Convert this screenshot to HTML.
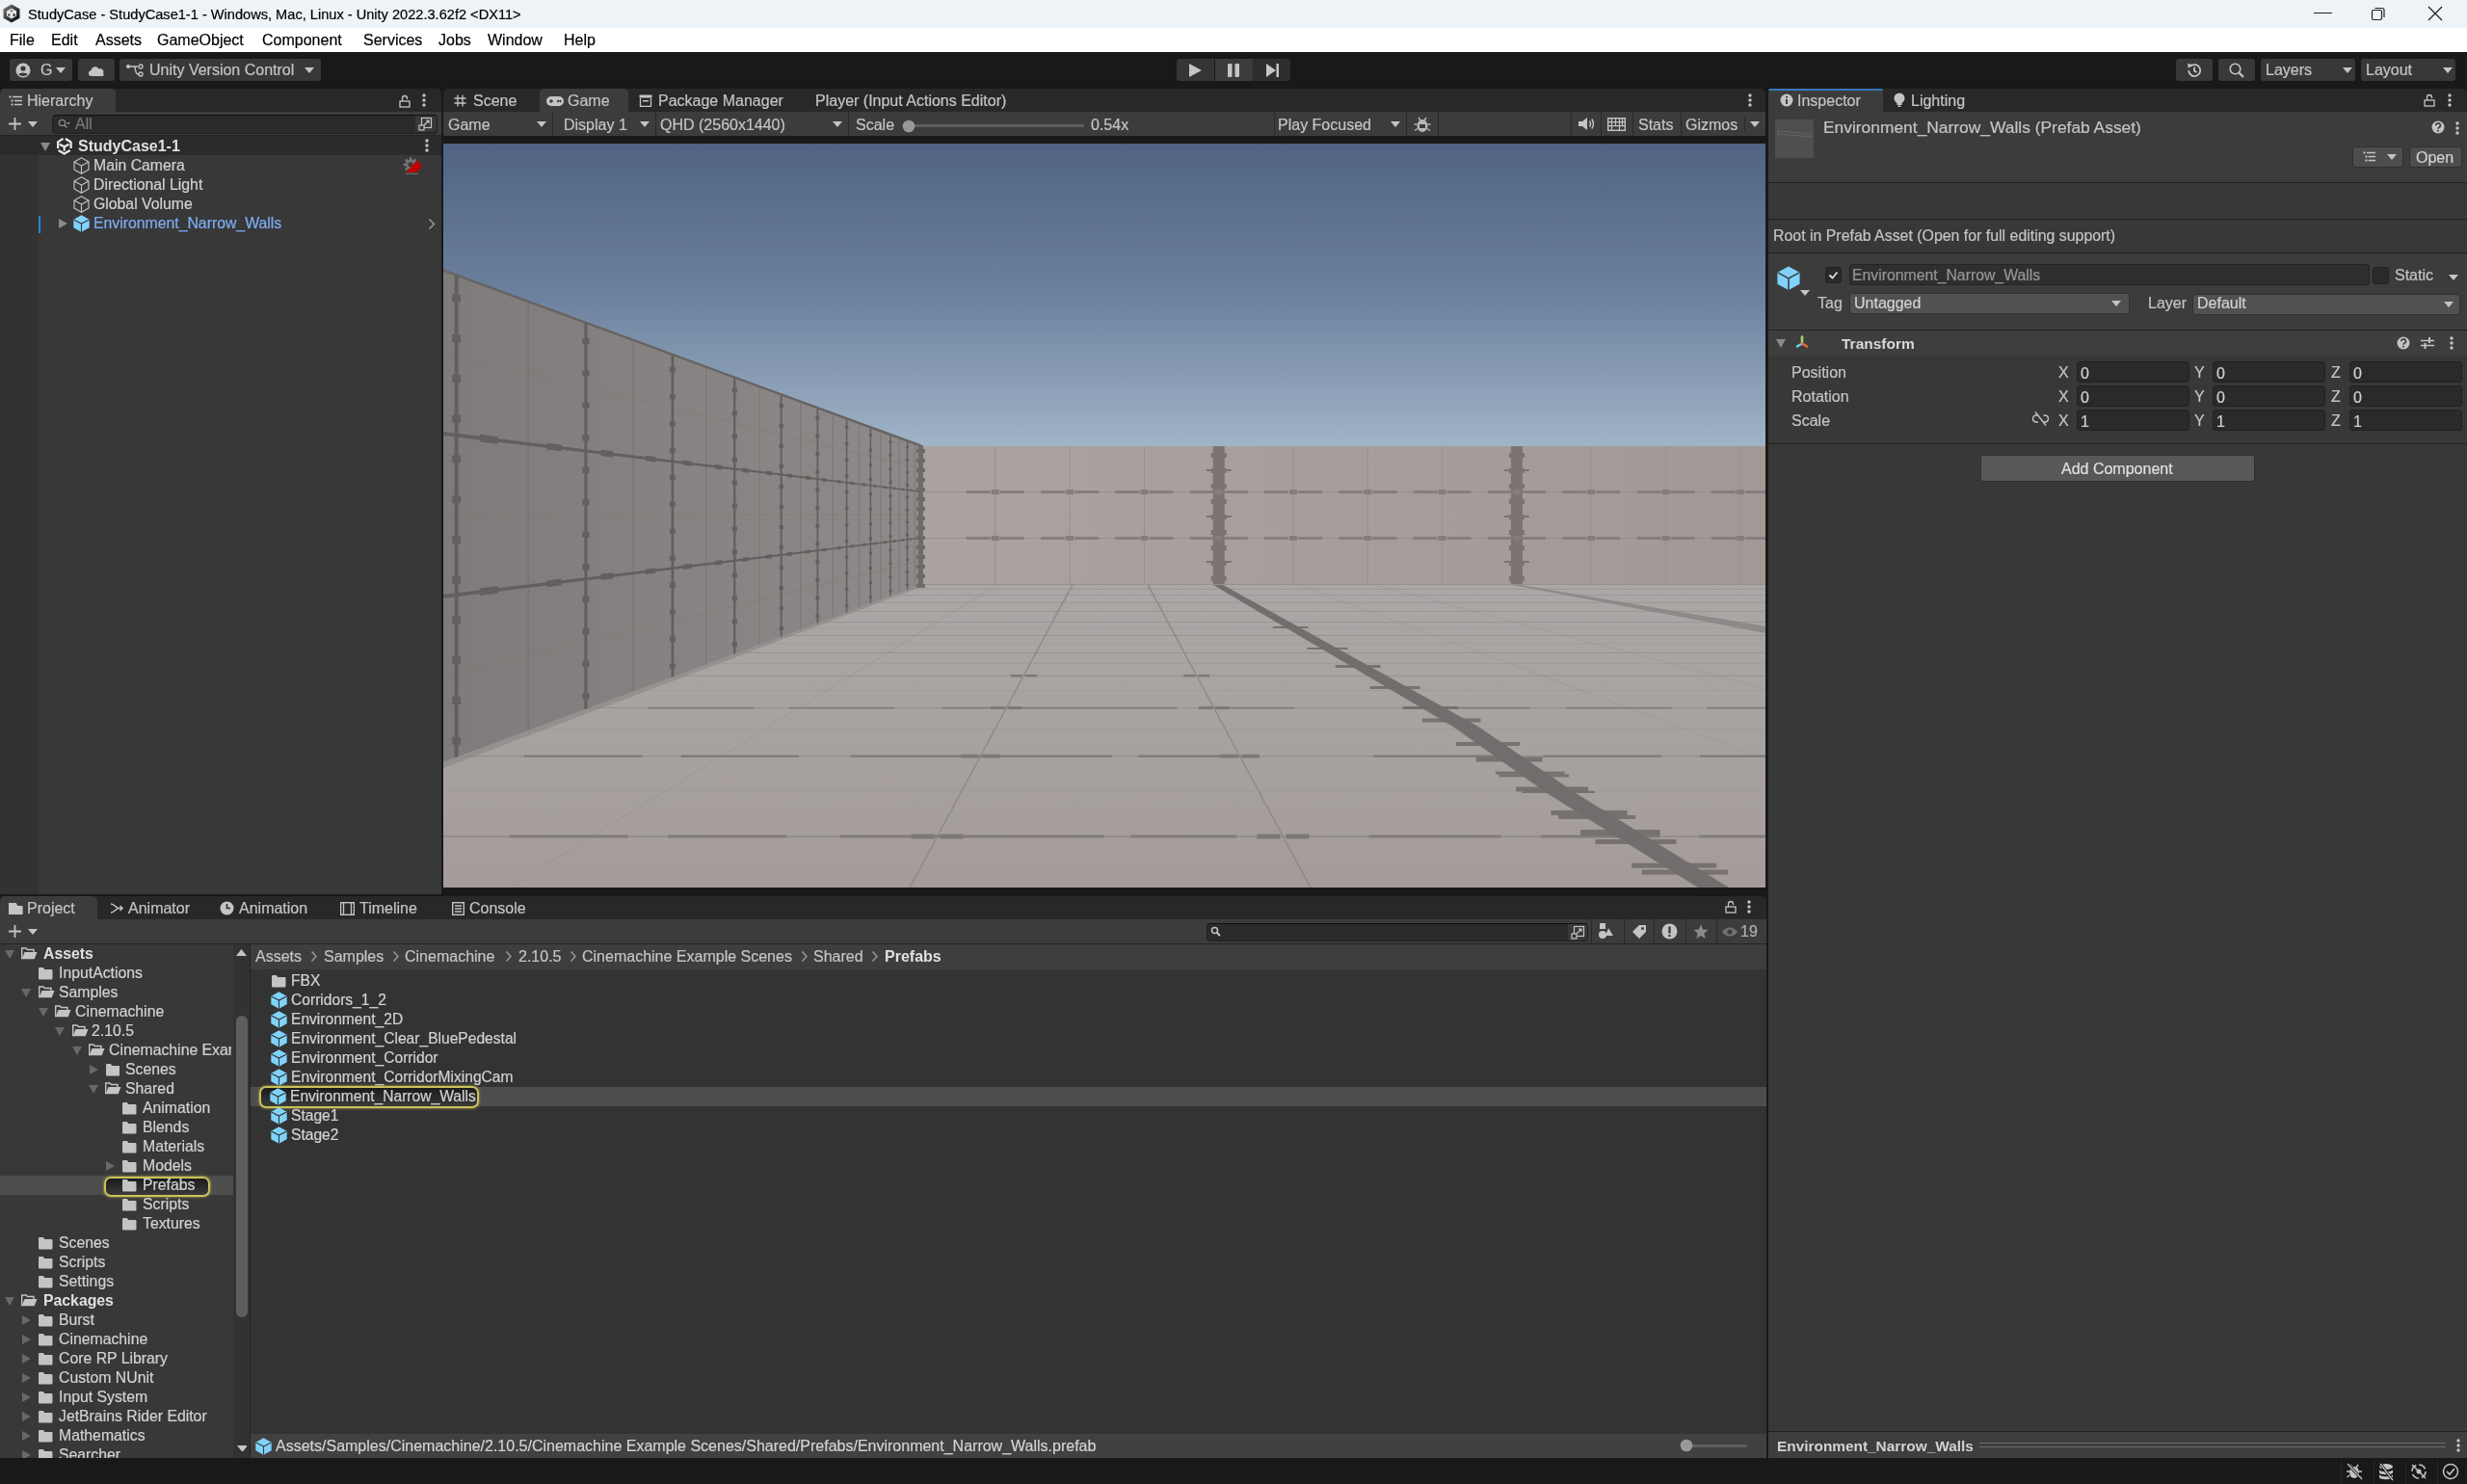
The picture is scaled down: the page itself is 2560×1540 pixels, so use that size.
<!DOCTYPE html><html><head><meta charset="utf-8"><style>
html,body{margin:0;padding:0;width:2560px;height:1540px;overflow:hidden;background:#191919;font-family:"Liberation Sans",sans-serif}
div,svg{position:absolute}
.t{white-space:nowrap;line-height:20px;will-change:transform;-webkit-text-stroke:0.2px currentColor}
</style></head><body><div style="left:0px;top:0px;width:2560px;height:29px;background:#eef3f8;"></div><div style="left:0px;top:29px;width:2560px;height:25px;background:#ffffff;"></div><svg style="left:3px;top:4px" width="18" height="20" viewBox="0 0 18 20"><defs><linearGradient id="tg" x1="0" y1="0" x2="1" y2="1"><stop offset="0" stop-color="#888"/><stop offset="0.5" stop-color="#3a3a3a"/><stop offset="1" stop-color="#050505"/></linearGradient></defs><polygon points="9,0.5 17.5,5.2 17.5,14.8 9,19.5 0.5,14.8 0.5,5.2" fill="url(#tg)"/><path d="M9 4.5 L14 7.5 V12.5 L9 15.5 L4 12.5 V7.5 Z" fill="#e6e6e6"/><circle cx="9" cy="7.3" r="1.3" fill="#888"/><circle cx="6.3" cy="11.6" r="1.3" fill="#555"/><circle cx="11.7" cy="11.6" r="1.3" fill="#222"/></svg><div class="t" style="left:29px;top:5px;font-size:14.6px;color:#000;">StudyCase - StudyCase1-1 - Windows, Mac, Linux - Unity 2022.3.62f2 &lt;DX11&gt;</div><div style="left:2401px;top:13px;width:19px;height:1px;background:#222"></div><svg style="left:2460px;top:6px" width="16" height="16" viewBox="0 0 16 16"><rect x="1.5" y="4.5" width="10" height="10" rx="1.5" fill="none" stroke="#222" stroke-width="1.2"/><path d="M4.5 2.5 H12 a2 2 0 0 1 2 2 V12" fill="none" stroke="#222" stroke-width="1.2"/></svg><svg style="left:2518px;top:5px" width="18" height="18" viewBox="0 0 18 18"><path d="M2 2 L16 16 M16 2 L2 16" stroke="#222" stroke-width="1.3"/></svg><div class="t" style="left:9.7px;top:32px;font-size:16px;color:#000;">File</div><div class="t" style="left:52.5px;top:32px;font-size:16px;color:#000;">Edit</div><div class="t" style="left:98.6px;top:32px;font-size:16px;color:#000;">Assets</div><div class="t" style="left:163.4px;top:32px;font-size:16px;color:#000;">GameObject</div><div class="t" style="left:272.4px;top:32px;font-size:16px;color:#000;">Component</div><div class="t" style="left:377.4px;top:32px;font-size:16px;color:#000;">Services</div><div class="t" style="left:455.2px;top:32px;font-size:16px;color:#000;">Jobs</div><div class="t" style="left:506.4px;top:32px;font-size:16px;color:#000;">Window</div><div class="t" style="left:584.6px;top:32px;font-size:16px;color:#000;">Help</div><div style="left:0px;top:54px;width:2560px;height:38px;background:#191919;"></div><div style="left:10px;top:61px;width:65px;height:23px;background:#383838;border-radius:3px;"></div><div style="left:81px;top:61px;width:38px;height:23px;background:#383838;border-radius:3px;"></div><div style="left:124px;top:61px;width:209px;height:23px;background:#383838;border-radius:3px;"></div><svg style="left:16px;top:65px" width="16" height="16" viewBox="0 0 16 16"><circle cx="8" cy="8" r="7.5" fill="#c4c4c4"/><circle cx="8" cy="6" r="2.6" fill="#383838"/><path d="M3.2 12.6 C4.5 9.8 11.5 9.8 12.8 12.6 C11.5 14.3 4.5 14.3 3.2 12.6Z" fill="#383838"/></svg><div class="t" style="left:42px;top:63px;font-size:16px;color:#c4c4c4;">G</div><svg style="left:58px;top:70px" width="10" height="6"><polygon points="0,0 10,0 5,6" fill="#c4c4c4"/></svg><svg style="left:90px;top:66px" width="20" height="14" viewBox="0 0 20 14"><path d="M5 13 C1 13 1 7.5 4.5 7.2 C5 3 10.5 1.5 12.5 5.5 C16 4.5 18.5 7.5 17 10 C18.5 12 17.5 13 15.5 13 Z" fill="#c4c4c4"/></svg><svg style="left:130px;top:66px" width="20" height="14" viewBox="0 0 20 14"><circle cx="3" cy="3" r="2" fill="#c4c4c4"/><path d="M3 3 H9 C11 3 10 11 13 11 H15 M9 3 H13" stroke="#c4c4c4" stroke-width="1.4" fill="none"/><circle cx="16" cy="3" r="2" fill="none" stroke="#c4c4c4" stroke-width="1.3"/><circle cx="16" cy="11" r="2" fill="none" stroke="#c4c4c4" stroke-width="1.3"/></svg><div class="t" style="left:155px;top:63px;font-size:16px;color:#c4c4c4;">Unity Version Control</div><svg style="left:316px;top:70px" width="10" height="6"><polygon points="0,0 10,0 5,6" fill="#c4c4c4"/></svg><div style="left:1221px;top:61px;width:39px;height:23px;background:#353535;border-radius:3px 0 0 3px;"></div><div style="left:1261px;top:61px;width:39px;height:23px;background:#3c3c3c;"></div><div style="left:1300px;top:61px;width:39px;height:23px;background:#2e2e2e;border-radius:0 3px 3px 0;"></div><svg style="left:1234px;top:66px" width="13" height="14"><polygon points="0,0 13,7 0,14" fill="#c4c4c4"/></svg><svg style="left:1274px;top:66px" width="12" height="14"><rect x="0" y="0" width="4.5" height="14" rx="1" fill="#c4c4c4"/><rect x="7.5" y="0" width="4.5" height="14" rx="1" fill="#c4c4c4"/></svg><svg style="left:1314px;top:66px" width="13" height="14"><polygon points="0,0 10,7 0,14" fill="#c4c4c4"/><rect x="10.5" y="0" width="2.5" height="14" fill="#c4c4c4"/></svg><div style="left:2258px;top:61px;width:38px;height:23px;background:#383838;border-radius:3px;"></div><div style="left:2302px;top:61px;width:38px;height:23px;background:#383838;border-radius:3px;"></div><div style="left:2346px;top:61px;width:98px;height:23px;background:#383838;border-radius:3px;"></div><div style="left:2450px;top:61px;width:98px;height:23px;background:#383838;border-radius:3px;"></div><svg style="left:2268px;top:64px" width="18" height="18" viewBox="0 0 18 18"><path d="M3.2 9 A6 6 0 1 0 5 4.8" fill="none" stroke="#c4c4c4" stroke-width="1.8"/><polygon points="2,2 7,3 3,7" fill="#c4c4c4"/><path d="M9 5.5 V9.5 L11.5 11" stroke="#c4c4c4" stroke-width="1.8" fill="none"/></svg><svg style="left:2312px;top:64px" width="18" height="18" viewBox="0 0 18 18"><circle cx="7.5" cy="7.5" r="5.3" fill="none" stroke="#c4c4c4" stroke-width="1.6"/><path d="M11.5 11.5 L16 16" stroke="#c4c4c4" stroke-width="2.2"/></svg><div class="t" style="left:2351px;top:63px;font-size:16px;color:#c4c4c4;">Layers</div><svg style="left:2431px;top:70px" width="10" height="6"><polygon points="0,0 10,0 5,6" fill="#c4c4c4"/></svg><div class="t" style="left:2455px;top:63px;font-size:16px;color:#c4c4c4;">Layout</div><svg style="left:2535px;top:70px" width="10" height="6"><polygon points="0,0 10,0 5,6" fill="#c4c4c4"/></svg><div style="left:0px;top:92px;width:458px;height:24px;background:#282828;border-radius:5px 5px 0 0;"></div><div style="left:0px;top:116px;width:458px;height:812px;background:#383838;"></div><div style="left:0px;top:92px;width:120px;height:24px;background:#3c3c3c;border-radius:5px 5px 0 0;"></div><svg style="left:9px;top:99px" width="14" height="12" viewBox="0 0 14 12"><path d="M4 1.5 H14 M6 5.5 H14 M6 9.5 H14" stroke="#c4c4c4" stroke-width="1.3"/><rect x="0.5" y="0.5" width="2" height="2" fill="#c4c4c4"/><rect x="2.5" y="4.5" width="2" height="2" fill="#c4c4c4"/><rect x="2.5" y="8.5" width="2" height="2" fill="#c4c4c4"/></svg><div class="t" style="left:28px;top:95px;font-size:16px;color:#c4c4c4;">Hierarchy</div><svg style="left:414px;top:98px" width="12" height="14" viewBox="0 0 12 14"><rect x="1" y="7" width="10" height="6" fill="none" stroke="#c4c4c4" stroke-width="1.3"/><path d="M3.5 7 V4 a2.5 2.5 0 0 1 5 0 V5" fill="none" stroke="#c4c4c4" stroke-width="1.3"/></svg><svg style="left:438px;top:97px" width="4" height="14"><circle cx="2" cy="2" r="1.7" fill="#c4c4c4"/><circle cx="2" cy="7" r="1.7" fill="#c4c4c4"/><circle cx="2" cy="12" r="1.7" fill="#c4c4c4"/></svg><div style="left:0px;top:116px;width:458px;height:25px;background:#3c3c3c;"></div><div style="left:0px;top:140px;width:458px;height:1px;background:#232323;"></div><svg style="left:8px;top:121px" width="15" height="15"><path d="M7.5 1 V14 M1 7.5 H14" stroke="#c4c4c4" stroke-width="1.8"/></svg><svg style="left:29px;top:126px" width="10" height="6"><polygon points="0,0 10,0 5,6" fill="#c4c4c4"/></svg><div style="left:54px;top:119px;width:400px;height:20px;background:#2a2a2a;border-radius:4px;border:1px solid #212121;border-top-color:#111;box-sizing:border-box;"></div><div style="left:431px;top:120px;width:22px;height:17px;background:#383838;border-radius:0 3px 3px 0;"></div><svg style="left:434px;top:121px" width="15" height="15" viewBox="0 0 15 15"><rect x="3.5" y="1.5" width="10" height="10" fill="none" stroke="#c4c4c4" stroke-width="1.2"/><rect x="1" y="9" width="5" height="5" fill="#383838" stroke="#c4c4c4" stroke-width="1.2"/><path d="M6 9 L11 4 M8 4 H11 V7" stroke="#c4c4c4" stroke-width="1.2" fill="none"/></svg><svg style="left:60px;top:123px" width="13" height="11" viewBox="0 0 13 11"><circle cx="4.5" cy="4.5" r="3.2" fill="none" stroke="#8a8a8a" stroke-width="1.3"/><path d="M6.8 6.8 L9.5 9.5" stroke="#8a8a8a" stroke-width="1.5"/><polygon points="9,4 13,4 11,6.5" fill="#8a8a8a"/></svg><div class="t" style="left:78px;top:119px;font-size:16px;color:#7a7a7a;">All</div><div style="left:0px;top:141px;width:458px;height:20px;background:#2b2b2b;"></div><div style="left:0px;top:161px;width:40px;height:767px;background:#323232;"></div><svg style="left:42px;top:148px" width="10" height="9"><polygon points="0,0 10,0 5,9" fill="#8a8a8a"/></svg><svg style="left:59.3px;top:143px" width="16" height="18" viewBox="0 0 16 18"><path d="M6.5 0.9 L1.1 4.4 V11" fill="none" stroke="#e8e8e8" stroke-width="2.3" stroke-linejoin="round"/><path d="M8.9 0.9 L14.6 4.4 V11" fill="none" stroke="#e8e8e8" stroke-width="2.3" stroke-linejoin="round"/><path d="M2.8 6.8 L7.7 9.3 L12.5 6.8 M7.7 9.3 V13.5" fill="none" stroke="#e8e8e8" stroke-width="2.2" stroke-linejoin="round"/><path d="M1.6 13 L7.7 16.6 L13.8 13" fill="none" stroke="#e8e8e8" stroke-width="2.3" stroke-linejoin="round"/></svg><div class="t" style="left:81px;top:142px;font-size:16px;color:#e0e0e0;font-weight:bold;-webkit-text-stroke:0;">StudyCase1-1</div><svg style="left:441px;top:144px" width="4" height="14"><circle cx="2" cy="2" r="1.7" fill="#c4c4c4"/><circle cx="2" cy="7" r="1.7" fill="#c4c4c4"/><circle cx="2" cy="12" r="1.7" fill="#c4c4c4"/></svg><svg style="left:76px;top:163px" width="17" height="18" viewBox="0 0 17 18"><path d="M8.5 0.8 L16 4.9 V13.1 L8.5 17.2 L1 13.1 V4.9 Z M1 4.9 L8.5 9 L16 4.9 M8.5 9 V17.2" fill="none" stroke="#c4c4c4" stroke-width="1.15" stroke-linejoin="round"/></svg><div class="t" style="left:97px;top:162px;font-size:15.8px;color:#d2d2d2;">Main Camera</div><svg style="left:76px;top:183px" width="17" height="18" viewBox="0 0 17 18"><path d="M8.5 0.8 L16 4.9 V13.1 L8.5 17.2 L1 13.1 V4.9 Z M1 4.9 L8.5 9 L16 4.9 M8.5 9 V17.2" fill="none" stroke="#c4c4c4" stroke-width="1.15" stroke-linejoin="round"/></svg><div class="t" style="left:97px;top:182px;font-size:15.8px;color:#d2d2d2;">Directional Light</div><svg style="left:76px;top:203px" width="17" height="18" viewBox="0 0 17 18"><path d="M8.5 0.8 L16 4.9 V13.1 L8.5 17.2 L1 13.1 V4.9 Z M1 4.9 L8.5 9 L16 4.9 M8.5 9 V17.2" fill="none" stroke="#c4c4c4" stroke-width="1.15" stroke-linejoin="round"/></svg><div class="t" style="left:97px;top:202px;font-size:15.8px;color:#d2d2d2;">Global Volume</div><svg style="left:76px;top:223px" width="17" height="18.0" viewBox="0 0 17 18"><polygon points="8.5,0.3 16.7,4.7 16.7,13.3 8.5,17.7 0.3,13.3 0.3,4.7" fill="#7fd3fb"/><path d="M0.6 4.9 L8.5 9.1 L16.4 4.9 M8.5 9.1 V17.6" fill="none" stroke="#383838" stroke-width="1.1"/></svg><svg style="left:61px;top:227px" width="9" height="10"><polygon points="0,0 9,5 0,10" fill="#8a8a8a"/></svg><div class="t" style="left:97px;top:222px;font-size:15.8px;color:#7cadf2;">Environment_Narrow_Walls</div><div style="left:40px;top:224px;width:2px;height:18px;background:#1e88d8;"></div><svg style="left:444px;top:226px" width="8" height="13"><path d="M1.5 1.5 L6.5 6.5 L1.5 11.5" fill="none" stroke="#a0a0a0" stroke-width="1.4"/></svg><svg style="left:416px;top:161px" width="24" height="22" viewBox="0 0 24 22"><g transform="translate(10.1,9.8)" fill="#757575"><circle r="5"/><rect x="-1.3" y="-7.5" width="2.6" height="15"/><rect x="-7.5" y="-1.3" width="15" height="2.6"/><rect x="-1.3" y="-7.5" width="2.6" height="15" transform="rotate(45)"/><rect x="-1.3" y="-7.5" width="2.6" height="15" transform="rotate(-45)"/><circle r="2.6" fill="#383838"/></g><polygon points="5.9,17.8 17.5,4 17.5,8.5 20.8,8.5 20.8,14.5 17.5,14.5 17.5,17.8" fill="#c20000"/><rect x="5" y="18.6" width="13" height="1.3" fill="#6a6a6a"/></svg><div style="left:460px;top:92px;width:1372px;height:24px;background:#282828;border-radius:5px 5px 0 0;"></div><div style="left:560px;top:92px;width:92px;height:24px;background:#3c3c3c;border-radius:5px 5px 0 0;"></div><svg style="left:471px;top:98px" width="13" height="13" viewBox="0 0 13 13"><path d="M4 0.5 V12.5 M9 0.5 V12.5 M0.5 4 H12.5 M0.5 9 H12.5" stroke="#c4c4c4" stroke-width="1.3"/></svg><div class="t" style="left:491px;top:95px;font-size:16px;color:#c4c4c4;">Scene</div><svg style="left:567px;top:100px" width="18" height="10" viewBox="0 0 18 10"><rect x="0" y="0" width="18" height="10" rx="5" fill="#c4c4c4"/><path d="M3 5 H7 M5 3 V7" stroke="#3c3c3c" stroke-width="1.4"/><circle cx="12" cy="5" r="1.2" fill="#3c3c3c"/><circle cx="14.5" cy="5" r="1.2" fill="#3c3c3c"/></svg><div class="t" style="left:589px;top:95px;font-size:16px;color:#c4c4c4;">Game</div><svg style="left:663px;top:98px" width="14" height="13" viewBox="0 0 14 13"><rect x="0.5" y="0.5" width="13" height="3" fill="#c4c4c4"/><path d="M1.5 4 V12.5 H12.5 V4" fill="none" stroke="#c4c4c4" stroke-width="1.3"/><rect x="4" y="6" width="6" height="1.5" fill="#c4c4c4"/></svg><div class="t" style="left:683px;top:95px;font-size:16px;color:#c4c4c4;">Package Manager</div><div class="t" style="left:846px;top:95px;font-size:16px;color:#c4c4c4;">Player (Input Actions Editor)</div><svg style="left:1814px;top:97px" width="4" height="14"><circle cx="2" cy="2" r="1.7" fill="#c4c4c4"/><circle cx="2" cy="7" r="1.7" fill="#c4c4c4"/><circle cx="2" cy="12" r="1.7" fill="#c4c4c4"/></svg><div style="left:460px;top:116px;width:1372px;height:25px;background:#3c3c3c;"></div><div style="left:573px;top:116px;width:1px;height:25px;background:#2a2a2a;"></div><div style="left:680px;top:116px;width:1px;height:25px;background:#2a2a2a;"></div><div style="left:880px;top:116px;width:1px;height:25px;background:#2a2a2a;"></div><div style="left:1630px;top:116px;width:1px;height:25px;background:#2a2a2a;"></div><div style="left:1661px;top:116px;width:1px;height:25px;background:#2a2a2a;"></div><div style="left:1694px;top:116px;width:1px;height:25px;background:#2a2a2a;"></div><div style="left:1744px;top:116px;width:1px;height:25px;background:#2a2a2a;"></div><div style="left:1322px;top:116px;width:1px;height:25px;background:#2a2a2a;"></div><div style="left:1459px;top:116px;width:1px;height:25px;background:#2a2a2a;"></div><div style="left:1492px;top:116px;width:1px;height:25px;background:#2a2a2a;"></div><div class="t" style="left:465px;top:120px;font-size:16px;color:#c4c4c4;">Game</div><svg style="left:557px;top:126px" width="10" height="6"><polygon points="0,0 10,0 5,6" fill="#c4c4c4"/></svg><div class="t" style="left:585px;top:120px;font-size:16px;color:#c4c4c4;">Display 1</div><svg style="left:664px;top:126px" width="10" height="6"><polygon points="0,0 10,0 5,6" fill="#c4c4c4"/></svg><div class="t" style="left:685px;top:120px;font-size:16px;color:#c4c4c4;">QHD (2560x1440)</div><svg style="left:864px;top:126px" width="10" height="6"><polygon points="0,0 10,0 5,6" fill="#c4c4c4"/></svg><div class="t" style="left:888px;top:120px;font-size:16px;color:#c4c4c4;">Scale</div><div style="left:945px;top:129px;width:180px;height:3px;background:#5e5e5e;border-radius:2px;"></div><svg style="left:936px;top:123.5px" width="14" height="14"><circle cx="7" cy="7" r="6.3" fill="#999"/></svg><div class="t" style="left:1132px;top:120px;font-size:16px;color:#c4c4c4;">0.54x</div><div class="t" style="left:1326px;top:120px;font-size:16px;color:#c4c4c4;">Play Focused</div><svg style="left:1443px;top:126px" width="10" height="6"><polygon points="0,0 10,0 5,6" fill="#c4c4c4"/></svg><svg style="left:1466px;top:120px" width="20" height="18" viewBox="0 0 20 18"><ellipse cx="10" cy="10.5" rx="5.5" ry="6.5" fill="#b8b8b8"/><rect x="7" y="9" width="6" height="4" fill="#3c3c3c"/><path d="M6 2 L8 5 M14 2 L12 5 M1.5 9 H4.5 M15.5 9 H18.5 M2 15.5 L5 13.5 M18 15.5 L15 13.5" stroke="#b8b8b8" stroke-width="1.4"/></svg><svg style="left:1637px;top:121px" width="18" height="15" viewBox="0 0 18 15"><polygon points="1,5 5,5 10,1 10,14 5,10 1,10" fill="#c4c4c4"/><path d="M12.5 4.5 Q14.5 7.5 12.5 10.5 M14.8 2.5 Q18 7.5 14.8 12.5" fill="none" stroke="#c4c4c4" stroke-width="1.4"/></svg><svg style="left:1668px;top:122px" width="19" height="14" viewBox="0 0 19 14"><rect x="0.7" y="0.7" width="17.6" height="12.6" fill="none" stroke="#c4c4c4" stroke-width="1.4"/><path d="M0.7 4.7 H18 M0.7 8.7 H18 M4.5 1 V13 M8.5 1 V9 M12.5 1 V13 M15.5 1 V9" stroke="#c4c4c4" stroke-width="1.2"/></svg><div class="t" style="left:1700px;top:120px;font-size:16px;color:#c4c4c4;">Stats</div><div class="t" style="left:1749px;top:120px;font-size:16px;color:#c4c4c4;">Gizmos</div><div style="left:1810px;top:121px;width:1px;height:15px;background:#2a2a2a;"></div><svg style="left:1816px;top:126px" width="10" height="6"><polygon points="0,0 10,0 5,6" fill="#c4c4c4"/></svg><div style="left:460px;top:141px;width:1372px;height:787px;background:#191919;"></div><svg style="left:460px;top:149px" width="1372" height="772" viewBox="0 0 1372 772"><defs>
<linearGradient id="sky" x1="0" y1="0" x2="0" y2="1"><stop offset="0" stop-color="#506383"/><stop offset="0.5" stop-color="#6c819e"/><stop offset="1" stop-color="#a0b5c7"/></linearGradient>
<linearGradient id="flr" x1="0" y1="0" x2="0" y2="1"><stop offset="0" stop-color="#b5b1b1"/><stop offset="0.25" stop-color="#b4b0b0"/><stop offset="1" stop-color="#a39c9b"/></linearGradient>
<linearGradient id="lw" x1="0" y1="0" x2="1" y2="0"><stop offset="0" stop-color="#7f7b7a"/><stop offset="1" stop-color="#8e8a89"/></linearGradient>
<linearGradient id="bw" x1="0" y1="0" x2="1" y2="0"><stop offset="0" stop-color="#aba3a0"/><stop offset="1" stop-color="#a29996"/></linearGradient>
</defs><rect x="0" y="0" width="1372" height="772" fill="url(#flr)"/><rect x="0" y="0" width="1372" height="315" fill="url(#sky)"/><line x1="0.0" y1="719.0" x2="1372" y2="719.0" stroke="#8a8483" stroke-width="1.60" opacity="0.85"/><line x1="68.6" y1="719.0" x2="192.1" y2="719.0" stroke="#7f7978" stroke-width="3.20" opacity="0.9"/><line x1="233.2" y1="719.0" x2="356.7" y2="719.0" stroke="#7f7978" stroke-width="3.20" opacity="0.9"/><line x1="411.6" y1="719.0" x2="686.0" y2="719.0" stroke="#7f7978" stroke-width="3.20" opacity="0.9"/><line x1="713.4" y1="719.0" x2="823.2" y2="719.0" stroke="#7f7978" stroke-width="3.20" opacity="0.9"/><line x1="960.4" y1="719.0" x2="1097.6" y2="719.0" stroke="#7f7978" stroke-width="3.20" opacity="0.9"/><line x1="1138.8" y1="719.0" x2="1262.2" y2="719.0" stroke="#7f7978" stroke-width="3.20" opacity="0.9"/><line x1="1303.4" y1="719.0" x2="1372.0" y2="719.0" stroke="#7f7978" stroke-width="3.20" opacity="0.9"/><line x1="16.3" y1="635.7" x2="1372" y2="635.7" stroke="#8a8483" stroke-width="1.20" opacity="0.75"/><line x1="84.1" y1="635.7" x2="206.1" y2="635.7" stroke="#7f7978" stroke-width="2.40" opacity="0.9"/><line x1="246.8" y1="635.7" x2="368.8" y2="635.7" stroke="#7f7978" stroke-width="2.40" opacity="0.9"/><line x1="423.0" y1="635.7" x2="694.1" y2="635.7" stroke="#7f7978" stroke-width="2.40" opacity="0.9"/><line x1="721.3" y1="635.7" x2="829.7" y2="635.7" stroke="#7f7978" stroke-width="2.40" opacity="0.9"/><line x1="965.3" y1="635.7" x2="1100.9" y2="635.7" stroke="#7f7978" stroke-width="2.40" opacity="0.9"/><line x1="1141.5" y1="635.7" x2="1263.5" y2="635.7" stroke="#7f7978" stroke-width="2.40" opacity="0.9"/><line x1="1304.2" y1="635.7" x2="1372.0" y2="635.7" stroke="#7f7978" stroke-width="2.40" opacity="0.9"/><line x1="151.2" y1="585.6" x2="1372" y2="585.6" stroke="#8a8483" stroke-width="0.96" opacity="0.69"/><line x1="212.2" y1="585.6" x2="322.1" y2="585.6" stroke="#7f7978" stroke-width="1.92" opacity="0.9"/><line x1="358.7" y1="585.6" x2="468.6" y2="585.6" stroke="#7f7978" stroke-width="1.92" opacity="0.9"/><line x1="517.4" y1="585.6" x2="761.6" y2="585.6" stroke="#7f7978" stroke-width="1.92" opacity="0.9"/><line x1="786.0" y1="585.6" x2="883.7" y2="585.6" stroke="#7f7978" stroke-width="1.92" opacity="0.9"/><line x1="1005.8" y1="585.6" x2="1127.8" y2="585.6" stroke="#7f7978" stroke-width="1.92" opacity="0.9"/><line x1="1164.5" y1="585.6" x2="1274.3" y2="585.6" stroke="#7f7978" stroke-width="1.92" opacity="0.9"/><line x1="1311.0" y1="585.6" x2="1372.0" y2="585.6" stroke="#7f7978" stroke-width="1.92" opacity="0.9"/><line x1="241.2" y1="552.3" x2="1372" y2="552.3" stroke="#8a8483" stroke-width="0.90" opacity="0.65"/><line x1="305.5" y1="528.4" x2="1372" y2="528.4" stroke="#8a8483" stroke-width="0.90" opacity="0.62"/><line x1="353.8" y1="510.5" x2="1372" y2="510.5" stroke="#8a8483" stroke-width="0.90" opacity="0.60"/><line x1="391.3" y1="496.6" x2="1372" y2="496.6" stroke="#8a8483" stroke-width="0.90" opacity="0.58"/><line x1="421.3" y1="485.4" x2="1372" y2="485.4" stroke="#8a8483" stroke-width="0.90" opacity="0.57"/><line x1="445.9" y1="476.3" x2="1372" y2="476.3" stroke="#8a8483" stroke-width="0.90" opacity="0.56"/><line x1="466.4" y1="468.7" x2="1372" y2="468.7" stroke="#8a8483" stroke-width="0.90" opacity="0.55"/><line x1="483.8" y1="462.3" x2="1372" y2="462.3" stroke="#8a8483" stroke-width="0.90" opacity="0.54"/><line x1="574.5" y1="458" x2="68.9" y2="772" stroke="#8a8584" stroke-width="1.1" opacity="0.25"/><line x1="652.8" y1="458" x2="484.2" y2="772" stroke="#8a8584" stroke-width="1.6" opacity="0.75"/><rect x="485.6" y="716.5" width="24.0" height="5.0" fill="#7d7776"/><rect x="515.6" y="716.5" width="24.0" height="5.0" fill="#7d7776"/><rect x="537.1" y="633.8" width="18.0" height="3.8" fill="#7d7776"/><rect x="559.6" y="633.8" width="18.0" height="3.8" fill="#7d7776"/><rect x="568.0" y="584.1" width="14.4" height="3.0" fill="#7d7776"/><rect x="586.1" y="584.1" width="14.4" height="3.0" fill="#7d7776"/><rect x="588.7" y="551.0" width="12.0" height="2.5" fill="#7d7776"/><rect x="603.7" y="551.0" width="12.0" height="2.5" fill="#7d7776"/><line x1="731.2" y1="458" x2="899.8" y2="772" stroke="#8a8584" stroke-width="1.6" opacity="0.75"/><rect x="844.4" y="716.5" width="24.0" height="5.0" fill="#7d7776"/><rect x="874.4" y="716.5" width="24.0" height="5.0" fill="#7d7776"/><rect x="806.4" y="633.8" width="18.0" height="3.8" fill="#7d7776"/><rect x="828.9" y="633.8" width="18.0" height="3.8" fill="#7d7776"/><rect x="783.5" y="584.1" width="14.4" height="3.0" fill="#7d7776"/><rect x="801.5" y="584.1" width="14.4" height="3.0" fill="#7d7776"/><rect x="768.3" y="551.0" width="12.0" height="2.5" fill="#7d7776"/><rect x="783.3" y="551.0" width="12.0" height="2.5" fill="#7d7776"/><line x1="809.5" y1="458" x2="1315.1" y2="772" stroke="#8a8584" stroke-width="1.1" opacity="0.25"/><line x1="887.6" y1="458" x2="1729.2" y2="772" stroke="#8a8584" stroke-width="1.1" opacity="0.25"/><line x1="966.5" y1="458" x2="2147.1" y2="772" stroke="#8a8584" stroke-width="1.1" opacity="0.25"/><line x1="0.0" y1="671.4" x2="1372" y2="671.4" stroke="#9a9493" stroke-width="1" opacity="0.5"/><line x1="91.2" y1="607.9" x2="1372" y2="607.9" stroke="#9a9493" stroke-width="1" opacity="0.5"/><line x1="200.3" y1="567.4" x2="1372" y2="567.4" stroke="#9a9493" stroke-width="1" opacity="0.5"/><line x1="275.8" y1="539.4" x2="1372" y2="539.4" stroke="#9a9493" stroke-width="1" opacity="0.5"/><line x1="331.2" y1="518.8" x2="1372" y2="518.8" stroke="#9a9493" stroke-width="1" opacity="0.5"/><line x1="373.6" y1="503.1" x2="1372" y2="503.1" stroke="#9a9493" stroke-width="1" opacity="0.5"/><polygon points="0.0,641.7 495.5,458.0 495.5,460.0 0.0,648.0" fill="#8e8887" opacity="0.7"/><polygon points="799.0,458.0 1048.0,605.0 1145.0,674.0 1302.0,772.0 1334.0,772.0 1175.0,674.0 1074.0,605.0 809.0,458.0" fill="#6f6b6a" opacity="0.95"/><rect x="860.8" y="501.0" width="36.7" height="2" fill="#726d6c" opacity="0.9"/><rect x="896.5" y="523.0" width="42.2" height="2" fill="#726d6c" opacity="0.9"/><rect x="925.8" y="541.0" width="46.7" height="3" fill="#726d6c" opacity="0.9"/><rect x="961.5" y="563.0" width="52.1" height="3" fill="#726d6c" opacity="0.9"/><rect x="995.6" y="584.0" width="57.4" height="3" fill="#726d6c" opacity="0.9"/><rect x="1015.9" y="596.5" width="60.5" height="4" fill="#726d6c" opacity="0.9"/><rect x="1051.1" y="621.0" width="65.8" height="4" fill="#726d6c" opacity="0.9"/><rect x="1071.8" y="636.5" width="68.8" height="5" fill="#726d6c" opacity="0.9"/><rect x="1091.9" y="651.6" width="71.8" height="3" fill="#726d6c" opacity="0.9"/><rect x="1095.7" y="654.4" width="72.4" height="3" fill="#726d6c" opacity="0.9"/><rect x="1113.2" y="667.5" width="75.0" height="5" fill="#726d6c" opacity="0.9"/><rect x="1119.2" y="672.0" width="75.9" height="2" fill="#726d6c" opacity="0.9"/><rect x="1149.4" y="692.0" width="79.2" height="5" fill="#726d6c" opacity="0.9"/><rect x="1157.1" y="697.0" width="80.0" height="4" fill="#726d6c" opacity="0.9"/><rect x="1180.1" y="712.0" width="82.4" height="6" fill="#726d6c" opacity="0.9"/><rect x="1195.4" y="722.0" width="84.0" height="5" fill="#726d6c" opacity="0.9"/><rect x="1233.2" y="746.7" width="87.9" height="5" fill="#726d6c" opacity="0.9"/><rect x="1243.8" y="753.6" width="89.0" height="5" fill="#726d6c" opacity="0.9"/><polygon points="1109.0,458.0 1118.0,458.0 1372.0,501.0 1372.0,508.0" fill="#8a8584" opacity="0.85"/><rect x="495.5" y="314" width="876.5" height="144" fill="url(#bw)"/><line x1="495.5" y1="361.5" x2="1372" y2="361.5" stroke="#958e8b" stroke-width="1"/><line x1="495.5" y1="409.5" x2="1372" y2="409.5" stroke="#958e8b" stroke-width="1"/><line x1="572.8" y1="314" x2="572.8" y2="458" stroke="#9a928f" stroke-width="1.2"/><rect x="542.8" y="360.0" width="25" height="3" fill="#857e7c"/><rect x="577.8" y="360.0" width="25" height="3" fill="#857e7c"/><rect x="568.8" y="359.0" width="8" height="5" fill="#857d7b"/><rect x="542.8" y="408.0" width="25" height="3" fill="#857e7c"/><rect x="577.8" y="408.0" width="25" height="3" fill="#857e7c"/><rect x="568.8" y="407.0" width="8" height="5" fill="#857d7b"/><line x1="650.1" y1="314" x2="650.1" y2="458" stroke="#9a928f" stroke-width="1.2"/><rect x="620.1" y="360.0" width="25" height="3" fill="#857e7c"/><rect x="655.1" y="360.0" width="25" height="3" fill="#857e7c"/><rect x="646.1" y="359.0" width="8" height="5" fill="#857d7b"/><rect x="620.1" y="408.0" width="25" height="3" fill="#857e7c"/><rect x="655.1" y="408.0" width="25" height="3" fill="#857e7c"/><rect x="646.1" y="407.0" width="8" height="5" fill="#857d7b"/><line x1="727.4" y1="314" x2="727.4" y2="458" stroke="#9a928f" stroke-width="1.2"/><rect x="697.4" y="360.0" width="25" height="3" fill="#857e7c"/><rect x="732.4" y="360.0" width="25" height="3" fill="#857e7c"/><rect x="723.4" y="359.0" width="8" height="5" fill="#857d7b"/><rect x="697.4" y="408.0" width="25" height="3" fill="#857e7c"/><rect x="732.4" y="408.0" width="25" height="3" fill="#857e7c"/><rect x="723.4" y="407.0" width="8" height="5" fill="#857d7b"/><rect x="798.7" y="314" width="12" height="144" fill="#7a7472"/><rect x="796.7" y="321" width="16" height="5" fill="#7a7472"/><rect x="796.7" y="337" width="16" height="5" fill="#7a7472"/><rect x="796.7" y="353" width="16" height="5" fill="#7a7472"/><rect x="796.7" y="369" width="16" height="5" fill="#7a7472"/><rect x="796.7" y="385" width="16" height="5" fill="#7a7472"/><rect x="796.7" y="401" width="16" height="5" fill="#7a7472"/><rect x="796.7" y="417" width="16" height="5" fill="#7a7472"/><rect x="796.7" y="433" width="16" height="5" fill="#7a7472"/><rect x="796.7" y="449" width="16" height="5" fill="#7a7472"/><rect x="791.7" y="338" width="26" height="2" fill="#7a7472"/><rect x="791.7" y="386" width="26" height="2" fill="#7a7472"/><rect x="791.7" y="433" width="26" height="2" fill="#7a7472"/><rect x="774.7" y="360.0" width="25" height="3" fill="#857e7c"/><rect x="809.7" y="360.0" width="25" height="3" fill="#857e7c"/><rect x="800.7" y="359.0" width="8" height="5" fill="#857d7b"/><rect x="774.7" y="408.0" width="25" height="3" fill="#857e7c"/><rect x="809.7" y="408.0" width="25" height="3" fill="#857e7c"/><rect x="800.7" y="407.0" width="8" height="5" fill="#857d7b"/><line x1="882.0" y1="314" x2="882.0" y2="458" stroke="#9a928f" stroke-width="1.2"/><rect x="852.0" y="360.0" width="25" height="3" fill="#857e7c"/><rect x="887.0" y="360.0" width="25" height="3" fill="#857e7c"/><rect x="878.0" y="359.0" width="8" height="5" fill="#857d7b"/><rect x="852.0" y="408.0" width="25" height="3" fill="#857e7c"/><rect x="887.0" y="408.0" width="25" height="3" fill="#857e7c"/><rect x="878.0" y="407.0" width="8" height="5" fill="#857d7b"/><line x1="959.3" y1="314" x2="959.3" y2="458" stroke="#9a928f" stroke-width="1.2"/><rect x="929.3" y="360.0" width="25" height="3" fill="#857e7c"/><rect x="964.3" y="360.0" width="25" height="3" fill="#857e7c"/><rect x="955.3" y="359.0" width="8" height="5" fill="#857d7b"/><rect x="929.3" y="408.0" width="25" height="3" fill="#857e7c"/><rect x="964.3" y="408.0" width="25" height="3" fill="#857e7c"/><rect x="955.3" y="407.0" width="8" height="5" fill="#857d7b"/><line x1="1036.6" y1="314" x2="1036.6" y2="458" stroke="#9a928f" stroke-width="1.2"/><rect x="1006.6" y="360.0" width="25" height="3" fill="#857e7c"/><rect x="1041.6" y="360.0" width="25" height="3" fill="#857e7c"/><rect x="1032.6" y="359.0" width="8" height="5" fill="#857d7b"/><rect x="1006.6" y="408.0" width="25" height="3" fill="#857e7c"/><rect x="1041.6" y="408.0" width="25" height="3" fill="#857e7c"/><rect x="1032.6" y="407.0" width="8" height="5" fill="#857d7b"/><rect x="1107.9" y="314" width="12" height="144" fill="#7a7472"/><rect x="1105.9" y="321" width="16" height="5" fill="#7a7472"/><rect x="1105.9" y="337" width="16" height="5" fill="#7a7472"/><rect x="1105.9" y="353" width="16" height="5" fill="#7a7472"/><rect x="1105.9" y="369" width="16" height="5" fill="#7a7472"/><rect x="1105.9" y="385" width="16" height="5" fill="#7a7472"/><rect x="1105.9" y="401" width="16" height="5" fill="#7a7472"/><rect x="1105.9" y="417" width="16" height="5" fill="#7a7472"/><rect x="1105.9" y="433" width="16" height="5" fill="#7a7472"/><rect x="1105.9" y="449" width="16" height="5" fill="#7a7472"/><rect x="1100.9" y="338" width="26" height="2" fill="#7a7472"/><rect x="1100.9" y="386" width="26" height="2" fill="#7a7472"/><rect x="1100.9" y="433" width="26" height="2" fill="#7a7472"/><rect x="1083.9" y="360.0" width="25" height="3" fill="#857e7c"/><rect x="1118.9" y="360.0" width="25" height="3" fill="#857e7c"/><rect x="1109.9" y="359.0" width="8" height="5" fill="#857d7b"/><rect x="1083.9" y="408.0" width="25" height="3" fill="#857e7c"/><rect x="1118.9" y="408.0" width="25" height="3" fill="#857e7c"/><rect x="1109.9" y="407.0" width="8" height="5" fill="#857d7b"/><line x1="1191.2" y1="314" x2="1191.2" y2="458" stroke="#9a928f" stroke-width="1.2"/><rect x="1161.2" y="360.0" width="25" height="3" fill="#857e7c"/><rect x="1196.2" y="360.0" width="25" height="3" fill="#857e7c"/><rect x="1187.2" y="359.0" width="8" height="5" fill="#857d7b"/><rect x="1161.2" y="408.0" width="25" height="3" fill="#857e7c"/><rect x="1196.2" y="408.0" width="25" height="3" fill="#857e7c"/><rect x="1187.2" y="407.0" width="8" height="5" fill="#857d7b"/><line x1="1268.5" y1="314" x2="1268.5" y2="458" stroke="#9a928f" stroke-width="1.2"/><rect x="1238.5" y="360.0" width="25" height="3" fill="#857e7c"/><rect x="1273.5" y="360.0" width="25" height="3" fill="#857e7c"/><rect x="1264.5" y="359.0" width="8" height="5" fill="#857d7b"/><rect x="1238.5" y="408.0" width="25" height="3" fill="#857e7c"/><rect x="1273.5" y="408.0" width="25" height="3" fill="#857e7c"/><rect x="1264.5" y="407.0" width="8" height="5" fill="#857d7b"/><line x1="1345.8" y1="314" x2="1345.8" y2="458" stroke="#9a928f" stroke-width="1.2"/><rect x="1315.8" y="360.0" width="25" height="3" fill="#857e7c"/><rect x="1350.8" y="360.0" width="25" height="3" fill="#857e7c"/><rect x="1341.8" y="359.0" width="8" height="5" fill="#857d7b"/><rect x="1315.8" y="408.0" width="25" height="3" fill="#857e7c"/><rect x="1350.8" y="408.0" width="25" height="3" fill="#857e7c"/><rect x="1341.8" y="407.0" width="8" height="5" fill="#857d7b"/><line x1="495.5" y1="457.5" x2="1372" y2="457.5" stroke="#958f8d" stroke-width="1"/><polygon points="0.0,130.5 495.5,313.0 495.5,458.0 0.0,641.7" fill="url(#lw)"/><line x1="0" y1="216.7" x2="495.5" y2="337.2" stroke="#77736f" stroke-width="1" opacity="0.35"/><line x1="0" y1="385.0" x2="495.5" y2="385.0" stroke="#77736f" stroke-width="1" opacity="0.35"/><line x1="0" y1="553.3" x2="495.5" y2="432.8" stroke="#77736f" stroke-width="1" opacity="0.35"/><line x1="13.6" y1="135.5" x2="13.6" y2="636.7" stroke="#62605f" stroke-width="4.00"/><rect x="9.2" y="156.4" width="8.8" height="8.0" fill="#62605f"/><rect x="9.2" y="198.1" width="8.8" height="8.0" fill="#62605f"/><rect x="9.2" y="239.9" width="8.8" height="8.0" fill="#62605f"/><rect x="9.2" y="281.7" width="8.8" height="8.0" fill="#62605f"/><rect x="9.2" y="323.4" width="8.8" height="8.0" fill="#62605f"/><rect x="9.2" y="365.2" width="8.8" height="8.0" fill="#62605f"/><rect x="9.2" y="407.0" width="8.8" height="8.0" fill="#62605f"/><rect x="9.2" y="448.7" width="8.8" height="8.0" fill="#62605f"/><rect x="9.2" y="490.5" width="8.8" height="8.0" fill="#62605f"/><rect x="9.2" y="532.3" width="8.8" height="8.0" fill="#62605f"/><rect x="9.2" y="574.0" width="8.8" height="8.0" fill="#62605f"/><rect x="9.2" y="615.8" width="8.8" height="8.0" fill="#62605f"/><line x1="88.1" y1="162.9" x2="88.1" y2="609.0" stroke="#6d6968" stroke-width="1.16" opacity="0.75"/><line x1="147.9" y1="184.9" x2="147.9" y2="586.8" stroke="#62605f" stroke-width="3.21"/><rect x="144.4" y="201.6" width="7.1" height="6.4" fill="#62605f"/><rect x="144.4" y="235.1" width="7.1" height="6.4" fill="#62605f"/><rect x="144.4" y="268.6" width="7.1" height="6.4" fill="#62605f"/><rect x="144.4" y="302.1" width="7.1" height="6.4" fill="#62605f"/><rect x="144.4" y="335.6" width="7.1" height="6.4" fill="#62605f"/><rect x="144.4" y="369.1" width="7.1" height="6.4" fill="#62605f"/><rect x="144.4" y="402.6" width="7.1" height="6.4" fill="#62605f"/><rect x="144.4" y="436.1" width="7.1" height="6.4" fill="#62605f"/><rect x="144.4" y="469.6" width="7.1" height="6.4" fill="#62605f"/><rect x="144.4" y="503.1" width="7.1" height="6.4" fill="#62605f"/><rect x="144.4" y="536.6" width="7.1" height="6.4" fill="#62605f"/><rect x="144.4" y="570.1" width="7.1" height="6.4" fill="#62605f"/><line x1="197.0" y1="202.9" x2="197.0" y2="568.7" stroke="#6d6968" stroke-width="0.95" opacity="0.75"/><line x1="237.9" y1="218.0" x2="237.9" y2="553.5" stroke="#62605f" stroke-width="2.68"/><rect x="234.9" y="231.9" width="5.9" height="5.4" fill="#62605f"/><rect x="234.9" y="259.9" width="5.9" height="5.4" fill="#62605f"/><rect x="234.9" y="287.9" width="5.9" height="5.4" fill="#62605f"/><rect x="234.9" y="315.8" width="5.9" height="5.4" fill="#62605f"/><rect x="234.9" y="343.8" width="5.9" height="5.4" fill="#62605f"/><rect x="234.9" y="371.7" width="5.9" height="5.4" fill="#62605f"/><rect x="234.9" y="399.7" width="5.9" height="5.4" fill="#62605f"/><rect x="234.9" y="427.7" width="5.9" height="5.4" fill="#62605f"/><rect x="234.9" y="455.6" width="5.9" height="5.4" fill="#62605f"/><rect x="234.9" y="483.6" width="5.9" height="5.4" fill="#62605f"/><rect x="234.9" y="511.5" width="5.9" height="5.4" fill="#62605f"/><rect x="234.9" y="539.5" width="5.9" height="5.4" fill="#62605f"/><line x1="272.5" y1="230.7" x2="272.5" y2="540.6" stroke="#6d6968" stroke-width="0.80" opacity="0.75"/><line x1="302.3" y1="241.7" x2="302.3" y2="529.6" stroke="#62605f" stroke-width="2.30"/><rect x="299.8" y="253.7" width="5.1" height="4.6" fill="#62605f"/><rect x="299.8" y="277.7" width="5.1" height="4.6" fill="#62605f"/><rect x="299.8" y="301.6" width="5.1" height="4.6" fill="#62605f"/><rect x="299.8" y="325.6" width="5.1" height="4.6" fill="#62605f"/><rect x="299.8" y="349.6" width="5.1" height="4.6" fill="#62605f"/><rect x="299.8" y="373.6" width="5.1" height="4.6" fill="#62605f"/><rect x="299.8" y="397.6" width="5.1" height="4.6" fill="#62605f"/><rect x="299.8" y="421.6" width="5.1" height="4.6" fill="#62605f"/><rect x="299.8" y="445.6" width="5.1" height="4.6" fill="#62605f"/><rect x="299.8" y="469.6" width="5.1" height="4.6" fill="#62605f"/><rect x="299.8" y="493.6" width="5.1" height="4.6" fill="#62605f"/><rect x="299.8" y="517.6" width="5.1" height="4.6" fill="#62605f"/><line x1="328.1" y1="251.2" x2="328.1" y2="520.0" stroke="#6d6968" stroke-width="0.80" opacity="0.75"/><line x1="350.7" y1="259.5" x2="350.7" y2="511.6" stroke="#62605f" stroke-width="2.01"/><rect x="348.5" y="270.0" width="4.4" height="4.0" fill="#62605f"/><rect x="348.5" y="291.0" width="4.4" height="4.0" fill="#62605f"/><rect x="348.5" y="312.0" width="4.4" height="4.0" fill="#62605f"/><rect x="348.5" y="333.0" width="4.4" height="4.0" fill="#62605f"/><rect x="348.5" y="354.0" width="4.4" height="4.0" fill="#62605f"/><rect x="348.5" y="375.0" width="4.4" height="4.0" fill="#62605f"/><rect x="348.5" y="396.1" width="4.4" height="4.0" fill="#62605f"/><rect x="348.5" y="417.1" width="4.4" height="4.0" fill="#62605f"/><rect x="348.5" y="438.1" width="4.4" height="4.0" fill="#62605f"/><rect x="348.5" y="459.1" width="4.4" height="4.0" fill="#62605f"/><rect x="348.5" y="480.1" width="4.4" height="4.0" fill="#62605f"/><rect x="348.5" y="501.1" width="4.4" height="4.0" fill="#62605f"/><line x1="370.7" y1="266.8" x2="370.7" y2="504.2" stroke="#6d6968" stroke-width="0.80" opacity="0.75"/><line x1="388.4" y1="273.3" x2="388.4" y2="497.6" stroke="#62605f" stroke-width="1.79"/><rect x="386.4" y="282.7" width="3.9" height="3.6" fill="#62605f"/><rect x="386.4" y="301.4" width="3.9" height="3.6" fill="#62605f"/><rect x="386.4" y="320.1" width="3.9" height="3.6" fill="#62605f"/><rect x="386.4" y="338.8" width="3.9" height="3.6" fill="#62605f"/><rect x="386.4" y="357.4" width="3.9" height="3.6" fill="#62605f"/><rect x="386.4" y="376.1" width="3.9" height="3.6" fill="#62605f"/><rect x="386.4" y="394.8" width="3.9" height="3.6" fill="#62605f"/><rect x="386.4" y="413.5" width="3.9" height="3.6" fill="#62605f"/><rect x="386.4" y="432.2" width="3.9" height="3.6" fill="#62605f"/><rect x="386.4" y="450.9" width="3.9" height="3.6" fill="#62605f"/><rect x="386.4" y="469.6" width="3.9" height="3.6" fill="#62605f"/><rect x="386.4" y="488.3" width="3.9" height="3.6" fill="#62605f"/><line x1="404.3" y1="279.2" x2="404.3" y2="491.7" stroke="#6d6968" stroke-width="0.80" opacity="0.75"/><line x1="418.6" y1="284.5" x2="418.6" y2="486.4" stroke="#62605f" stroke-width="1.61"/><rect x="416.9" y="292.9" width="3.5" height="3.2" fill="#62605f"/><rect x="416.9" y="309.7" width="3.5" height="3.2" fill="#62605f"/><rect x="416.9" y="326.5" width="3.5" height="3.2" fill="#62605f"/><rect x="416.9" y="343.4" width="3.5" height="3.2" fill="#62605f"/><rect x="416.9" y="360.2" width="3.5" height="3.2" fill="#62605f"/><rect x="416.9" y="377.0" width="3.5" height="3.2" fill="#62605f"/><rect x="416.9" y="393.9" width="3.5" height="3.2" fill="#62605f"/><rect x="416.9" y="410.7" width="3.5" height="3.2" fill="#62605f"/><rect x="416.9" y="427.5" width="3.5" height="3.2" fill="#62605f"/><rect x="416.9" y="444.3" width="3.5" height="3.2" fill="#62605f"/><rect x="416.9" y="461.2" width="3.5" height="3.2" fill="#62605f"/><rect x="416.9" y="478.0" width="3.5" height="3.2" fill="#62605f"/><line x1="431.6" y1="289.2" x2="431.6" y2="481.6" stroke="#6d6968" stroke-width="0.80" opacity="0.75"/><line x1="443.4" y1="293.6" x2="443.4" y2="477.2" stroke="#62605f" stroke-width="1.47"/><rect x="441.8" y="301.2" width="3.2" height="2.9" fill="#62605f"/><rect x="441.8" y="316.5" width="3.2" height="2.9" fill="#62605f"/><rect x="441.8" y="331.8" width="3.2" height="2.9" fill="#62605f"/><rect x="441.8" y="347.1" width="3.2" height="2.9" fill="#62605f"/><rect x="441.8" y="362.4" width="3.2" height="2.9" fill="#62605f"/><rect x="441.8" y="377.7" width="3.2" height="2.9" fill="#62605f"/><rect x="441.8" y="393.1" width="3.2" height="2.9" fill="#62605f"/><rect x="441.8" y="408.4" width="3.2" height="2.9" fill="#62605f"/><rect x="441.8" y="423.7" width="3.2" height="2.9" fill="#62605f"/><rect x="441.8" y="439.0" width="3.2" height="2.9" fill="#62605f"/><rect x="441.8" y="454.3" width="3.2" height="2.9" fill="#62605f"/><rect x="441.8" y="469.6" width="3.2" height="2.9" fill="#62605f"/><line x1="454.1" y1="297.5" x2="454.1" y2="473.2" stroke="#6d6968" stroke-width="0.80" opacity="0.75"/><line x1="464.0" y1="301.1" x2="464.0" y2="469.6" stroke="#62605f" stroke-width="1.40"/><rect x="462.5" y="308.2" width="3.1" height="2.7" fill="#62605f"/><rect x="462.5" y="322.2" width="3.1" height="2.7" fill="#62605f"/><rect x="462.5" y="336.2" width="3.1" height="2.7" fill="#62605f"/><rect x="462.5" y="350.3" width="3.1" height="2.7" fill="#62605f"/><rect x="462.5" y="364.3" width="3.1" height="2.7" fill="#62605f"/><rect x="462.5" y="378.3" width="3.1" height="2.7" fill="#62605f"/><rect x="462.5" y="392.4" width="3.1" height="2.7" fill="#62605f"/><rect x="462.5" y="406.4" width="3.1" height="2.7" fill="#62605f"/><rect x="462.5" y="420.5" width="3.1" height="2.7" fill="#62605f"/><rect x="462.5" y="434.5" width="3.1" height="2.7" fill="#62605f"/><rect x="462.5" y="448.5" width="3.1" height="2.7" fill="#62605f"/><rect x="462.5" y="462.6" width="3.1" height="2.7" fill="#62605f"/><line x1="473.1" y1="304.5" x2="473.1" y2="466.2" stroke="#6d6968" stroke-width="0.80" opacity="0.75"/><line x1="481.5" y1="307.6" x2="481.5" y2="463.1" stroke="#62605f" stroke-width="1.40"/><rect x="479.9" y="314.0" width="3.1" height="2.5" fill="#62605f"/><rect x="479.9" y="327.0" width="3.1" height="2.5" fill="#62605f"/><rect x="479.9" y="340.0" width="3.1" height="2.5" fill="#62605f"/><rect x="479.9" y="352.9" width="3.1" height="2.5" fill="#62605f"/><rect x="479.9" y="365.9" width="3.1" height="2.5" fill="#62605f"/><rect x="479.9" y="378.9" width="3.1" height="2.5" fill="#62605f"/><rect x="479.9" y="391.8" width="3.1" height="2.5" fill="#62605f"/><rect x="479.9" y="404.8" width="3.1" height="2.5" fill="#62605f"/><rect x="479.9" y="417.7" width="3.1" height="2.5" fill="#62605f"/><rect x="479.9" y="430.7" width="3.1" height="2.5" fill="#62605f"/><rect x="479.9" y="443.7" width="3.1" height="2.5" fill="#62605f"/><rect x="479.9" y="456.6" width="3.1" height="2.5" fill="#62605f"/><line x1="489.2" y1="310.4" x2="489.2" y2="460.2" stroke="#6d6968" stroke-width="0.80" opacity="0.75"/><line x1="496.5" y1="313.1" x2="496.5" y2="457.5" stroke="#62605f" stroke-width="1.40"/><rect x="494.9" y="319.1" width="3.1" height="2.3" fill="#62605f"/><rect x="494.9" y="331.1" width="3.1" height="2.3" fill="#62605f"/><rect x="494.9" y="343.2" width="3.1" height="2.3" fill="#62605f"/><rect x="494.9" y="355.2" width="3.1" height="2.3" fill="#62605f"/><rect x="494.9" y="367.3" width="3.1" height="2.3" fill="#62605f"/><rect x="494.9" y="379.3" width="3.1" height="2.3" fill="#62605f"/><rect x="494.9" y="391.3" width="3.1" height="2.3" fill="#62605f"/><rect x="494.9" y="403.4" width="3.1" height="2.3" fill="#62605f"/><rect x="494.9" y="415.4" width="3.1" height="2.3" fill="#62605f"/><rect x="494.9" y="427.4" width="3.1" height="2.3" fill="#62605f"/><rect x="494.9" y="439.5" width="3.1" height="2.3" fill="#62605f"/><rect x="494.9" y="451.5" width="3.1" height="2.3" fill="#62605f"/><polygon points="0,299.0 495.5,360.6 495.5,361.7 0,303.0" fill="#62605f"/><polygon points="37.8,301.8 56.7,304.1 56.7,311.7 37.8,309.4" fill="#62605f"/><polygon points="107.4,310.7 122.6,312.5 122.6,319.3 107.4,317.4" fill="#62605f"/><polygon points="163.6,317.8 176.0,319.3 176.0,325.4 163.6,323.9" fill="#62605f"/><polygon points="210.0,323.7 220.3,325.0 220.3,330.5 210.0,329.3" fill="#62605f"/><polygon points="248.9,328.6 257.6,329.7 257.6,334.8 248.9,333.8" fill="#62605f"/><polygon points="281.9,332.9 289.4,333.8 289.4,338.5 281.9,337.6" fill="#62605f"/><polygon points="310.4,336.5 316.9,337.3 316.9,341.7 310.4,340.9" fill="#62605f"/><polygon points="335.2,339.6 340.9,340.3 340.9,344.4 335.2,343.8" fill="#62605f"/><polygon points="356.9,342.4 362.0,343.0 362.0,346.9 356.9,346.3" fill="#62605f"/><polygon points="376.2,344.8 380.7,345.4 380.7,349.0 376.2,348.5" fill="#62605f"/><polygon points="393.4,347.0 397.4,347.5 397.4,351.0 393.4,350.5" fill="#62605f"/><polygon points="408.8,349.0 412.4,349.4 412.4,352.7 408.8,352.3" fill="#62605f"/><polygon points="422.6,350.7 425.9,351.1 425.9,354.3 422.6,353.9" fill="#62605f"/><polygon points="435.2,352.3 438.2,352.7 438.2,355.7 435.2,355.3" fill="#62605f"/><polygon points="446.7,353.8 449.4,354.1 449.4,357.0 446.7,356.6" fill="#62605f"/><polygon points="457.2,355.1 459.7,355.4 459.7,358.2 457.2,357.9" fill="#62605f"/><polygon points="466.8,356.4 469.1,356.6 469.1,359.2 466.8,359.0" fill="#62605f"/><polygon points="475.7,357.5 477.8,357.7 477.8,360.2 475.7,360.0" fill="#62605f"/><polygon points="483.9,358.5 485.8,358.8 485.8,361.2 483.9,360.9" fill="#62605f"/><polygon points="491.5,359.5 493.3,359.7 493.3,362.0 491.5,361.8" fill="#62605f"/><polygon points="0,468.0 495.5,408.6 495.5,409.7 0,472.0" fill="#62605f"/><polygon points="37.8,461.6 56.7,459.3 56.7,466.8 37.8,469.1" fill="#62605f"/><polygon points="107.4,453.4 122.6,451.6 122.6,458.3 107.4,460.2" fill="#62605f"/><polygon points="163.6,446.8 176.0,445.3 176.0,451.4 163.6,453.0" fill="#62605f"/><polygon points="210.0,441.4 220.3,440.2 220.3,445.7 210.0,447.0" fill="#62605f"/><polygon points="248.9,436.9 257.6,435.8 257.6,440.9 248.9,442.0" fill="#62605f"/><polygon points="281.9,433.0 289.4,432.1 289.4,436.8 281.9,437.7" fill="#62605f"/><polygon points="310.4,429.7 316.9,428.9 316.9,433.3 310.4,434.1" fill="#62605f"/><polygon points="335.2,426.8 340.9,426.1 340.9,430.2 335.2,430.9" fill="#62605f"/><polygon points="356.9,424.2 362.0,423.6 362.0,427.5 356.9,428.1" fill="#62605f"/><polygon points="376.2,422.0 380.7,421.4 380.7,425.1 376.2,425.6" fill="#62605f"/><polygon points="393.4,420.0 397.4,419.5 397.4,422.9 393.4,423.4" fill="#62605f"/><polygon points="408.8,418.2 412.4,417.7 412.4,421.0 408.8,421.4" fill="#62605f"/><polygon points="422.6,416.5 425.9,416.1 425.9,419.2 422.6,419.6" fill="#62605f"/><polygon points="435.2,415.1 438.2,414.7 438.2,417.7 435.2,418.0" fill="#62605f"/><polygon points="446.7,413.7 449.4,413.4 449.4,416.2 446.7,416.5" fill="#62605f"/><polygon points="457.2,412.5 459.7,412.2 459.7,414.9 457.2,415.2" fill="#62605f"/><polygon points="466.8,411.4 469.1,411.1 469.1,413.7 466.8,414.0" fill="#62605f"/><polygon points="475.7,410.3 477.8,410.1 477.8,412.6 475.7,412.8" fill="#62605f"/><polygon points="483.9,409.4 485.8,409.1 485.8,411.5 483.9,411.8" fill="#62605f"/><polygon points="491.5,408.5 493.3,408.3 493.3,410.6 491.5,410.8" fill="#62605f"/><line x1="0" y1="131.5" x2="495.5" y2="313.5" stroke="#676463" stroke-width="2.4"/><rect x="493" y="313" width="5" height="145" fill="#6f6a68"/><rect x="491" y="317" width="9" height="4" fill="#6f6a68"/><rect x="491" y="327" width="9" height="4" fill="#6f6a68"/><rect x="491" y="337" width="9" height="4" fill="#6f6a68"/><rect x="491" y="347" width="9" height="4" fill="#6f6a68"/><rect x="491" y="357" width="9" height="4" fill="#6f6a68"/><rect x="491" y="367" width="9" height="4" fill="#6f6a68"/><rect x="491" y="377" width="9" height="4" fill="#6f6a68"/><rect x="491" y="387" width="9" height="4" fill="#6f6a68"/><rect x="491" y="397" width="9" height="4" fill="#6f6a68"/><rect x="491" y="407" width="9" height="4" fill="#6f6a68"/><rect x="491" y="417" width="9" height="4" fill="#6f6a68"/><rect x="491" y="427" width="9" height="4" fill="#6f6a68"/><rect x="491" y="437" width="9" height="4" fill="#6f6a68"/><rect x="491" y="447" width="9" height="4" fill="#6f6a68"/><rect x="491" y="457" width="9" height="4" fill="#6f6a68"/></svg><div style="left:1835px;top:92px;width:725px;height:24px;background:#282828;border-radius:5px 5px 0 0;"></div><div style="left:1835px;top:116px;width:725px;height:1397px;background:#383838;"></div><div style="left:1835px;top:92px;width:119px;height:24px;background:#3c3c3c;border-radius:5px 5px 0 0;"></div><div style="left:1835px;top:92px;width:119px;height:2px;background:#3a79bb;border-radius:5px 5px 0 0;"></div><svg style="left:1847px;top:97px" width="14" height="14" viewBox="0 0 14 14"><circle cx="7" cy="7" r="6.5" fill="#c4c4c4"/><rect x="6" y="6" width="2" height="5" fill="#3c3c3c"/><circle cx="7" cy="3.8" r="1.1" fill="#3c3c3c"/></svg><div class="t" style="left:1865px;top:95px;font-size:16px;color:#c4c4c4;">Inspector</div><svg style="left:1965px;top:96px" width="12" height="16" viewBox="0 0 12 16"><circle cx="6" cy="6" r="5.5" fill="#c4c4c4"/><rect x="3.5" y="10" width="5" height="3" fill="#c4c4c4"/><rect x="4.5" y="13.5" width="3" height="1.5" fill="#c4c4c4"/></svg><div class="t" style="left:1983px;top:95px;font-size:16px;color:#c4c4c4;">Lighting</div><svg style="left:2515px;top:97px" width="12" height="14" viewBox="0 0 12 14"><rect x="1" y="7" width="10" height="6" fill="none" stroke="#c4c4c4" stroke-width="1.3"/><path d="M3.5 7 V4 a2.5 2.5 0 0 1 5 0 V5" fill="none" stroke="#c4c4c4" stroke-width="1.3"/></svg><svg style="left:2540px;top:97px" width="4" height="14"><circle cx="2" cy="2" r="1.7" fill="#c4c4c4"/><circle cx="2" cy="7" r="1.7" fill="#c4c4c4"/><circle cx="2" cy="12" r="1.7" fill="#c4c4c4"/></svg><div style="left:1835px;top:116px;width:725px;height:74px;background:#3c3c3c;"></div><div style="left:1842px;top:124px;width:40px;height:40px;background:#4f4f4f;"></div><svg style="left:1843px;top:133px" width="38" height="12" viewBox="0 0 38 12"><path d="M2 3 L36 6 L36 9 L2 6 Z" fill="none" stroke="#777" stroke-width="0.8" stroke-dasharray="2 1"/></svg><div class="t" style="left:1892px;top:122px;font-size:17.4px;color:#c4c4c4;">Environment_Narrow_Walls (Prefab Asset)</div><svg style="left:2523px;top:125px" width="14" height="14" viewBox="0 0 14 14"><circle cx="7" cy="7" r="6.5" fill="#c4c4c4"/><path d="M4.8 5.2 a2.3 2.2 0 1 1 3.2 2 c-0.8 0.4 -1 0.8 -1 1.6" fill="none" stroke="#3c3c3c" stroke-width="1.7"/><circle cx="7" cy="10.8" r="1" fill="#3c3c3c"/></svg><svg style="left:2548px;top:126px" width="4" height="14"><circle cx="2" cy="2" r="1.7" fill="#c4c4c4"/><circle cx="2" cy="7" r="1.7" fill="#c4c4c4"/><circle cx="2" cy="12" r="1.7" fill="#c4c4c4"/></svg><div style="left:2441px;top:152px;width:53px;height:22px;background:#4d4d4d;border-radius:3px;border:1px solid #303030;box-sizing:border-box;"></div><svg style="left:2452px;top:157px" width="14" height="11" viewBox="0 0 14 11"><path d="M4 1.5 H13 M5.5 5.5 H13 M5.5 9.5 H13" stroke="#c4c4c4" stroke-width="1.4"/><rect x="0.5" y="0.5" width="2" height="2" fill="#c4c4c4"/><rect x="2.5" y="4.5" width="2" height="2" fill="#c4c4c4"/><rect x="2.5" y="8.5" width="2" height="2" fill="#c4c4c4"/></svg><svg style="left:2477px;top:160px" width="10" height="6"><polygon points="0,0 10,0 5,6" fill="#c4c4c4"/></svg><div style="left:2500px;top:152px;width:55px;height:22px;background:#4d4d4d;border-radius:3px;border:1px solid #303030;box-sizing:border-box;"></div><div class="t" style="left:2507px;top:154px;font-size:16px;color:#d2d2d2;">Open</div><div style="left:1835px;top:189px;width:725px;height:1px;background:#232323;"></div><div style="left:1835px;top:190px;width:725px;height:37px;background:#383838;"></div><div style="left:1835px;top:227px;width:725px;height:1px;background:#232323;"></div><div class="t" style="left:1840px;top:235px;font-size:15.9px;color:#c4c4c4;">Root in Prefab Asset (Open for full editing support)</div><div style="left:1835px;top:262px;width:725px;height:1px;background:#232323;"></div><div style="left:1835px;top:263px;width:725px;height:79px;background:#3c3c3c;"></div><svg style="left:1844px;top:276px" width="24" height="25.4" viewBox="0 0 17 18"><polygon points="8.5,0.3 16.7,4.7 16.7,13.3 8.5,17.7 0.3,13.3 0.3,4.7" fill="#7fd3fb"/><path d="M0.6 4.9 L8.5 9.1 L16.4 4.9 M8.5 9.1 V17.6" fill="none" stroke="#3c3c3c" stroke-width="1.1"/></svg><svg style="left:1868px;top:301px" width="10" height="6"><polygon points="0,0 10,0 5,6" fill="#c4c4c4"/></svg><div style="left:1894px;top:277px;width:17px;height:17px;background:#2a2a2a;border-radius:3px;border:1px solid #212121;box-sizing:border-box;"></div><svg style="left:1896px;top:279px" width="13" height="13"><path d="M2.5 6.5 L5.5 9.5 L10.5 3.5" fill="none" stroke="#e0e0e0" stroke-width="1.8"/></svg><div style="left:1919px;top:274px;width:540px;height:22px;background:#2f2f2f;border-radius:3px;border:1px solid #242424;box-sizing:border-box;"></div><div class="t" style="left:1922px;top:276px;font-size:15.8px;color:#959595;">Environment_Narrow_Walls</div><div style="left:2462px;top:277px;width:17px;height:18px;background:#2a2a2a;border-radius:3px;border:1px solid #212121;box-sizing:border-box;"></div><div class="t" style="left:2485px;top:276px;font-size:16px;color:#c4c4c4;">Static</div><svg style="left:2541px;top:285px" width="10" height="6"><polygon points="0,0 10,0 5,6" fill="#c4c4c4"/></svg><div class="t" style="left:1886px;top:305px;font-size:16px;color:#c4c4c4;">Tag</div><div style="left:1919px;top:304px;width:291px;height:22px;background:#515151;border-radius:3px;border:1px solid #303030;box-sizing:border-box;"></div><div class="t" style="left:1924px;top:305px;font-size:16px;color:#d2d2d2;">Untagged</div><svg style="left:2191px;top:312px" width="10" height="6"><polygon points="0,0 10,0 5,6" fill="#c4c4c4"/></svg><div class="t" style="left:2229px;top:305px;font-size:16px;color:#c4c4c4;">Layer</div><div style="left:2275px;top:305px;width:278px;height:22px;background:#515151;border-radius:3px;border:1px solid #303030;box-sizing:border-box;"></div><div class="t" style="left:2280px;top:305px;font-size:16px;color:#d2d2d2;">Default</div><svg style="left:2536px;top:313px" width="10" height="6"><polygon points="0,0 10,0 5,6" fill="#c4c4c4"/></svg><div style="left:1835px;top:342px;width:725px;height:1px;background:#232323;"></div><div style="left:1835px;top:343px;width:725px;height:26px;background:#3e3e3e;"></div><svg style="left:1843px;top:352px" width="10" height="9"><polygon points="0,0 10,0 5,9" fill="#8a8a8a"/></svg><svg style="left:1861px;top:347px" width="18" height="18" viewBox="0 0 18 18"><path d="M9 2.5 V8" stroke="#a4d65e" stroke-width="2.6" stroke-linecap="round"/><path d="M9 9.5 L4 12.5" stroke="#6fcdfa" stroke-width="2.6" stroke-linecap="round"/><path d="M9 9.5 L14 12.5" stroke="#f06a38" stroke-width="2.6" stroke-linecap="round"/></svg><div class="t" style="left:1911px;top:347px;font-size:15.5px;color:#d8d8d8;font-weight:bold;-webkit-text-stroke:0;">Transform</div><svg style="left:2487px;top:349px" width="14" height="14" viewBox="0 0 14 14"><circle cx="7" cy="7" r="6.5" fill="#c4c4c4"/><path d="M4.8 5.2 a2.3 2.2 0 1 1 3.2 2 c-0.8 0.4 -1 0.8 -1 1.6" fill="none" stroke="#3e3e3e" stroke-width="1.7"/><circle cx="7" cy="10.8" r="1" fill="#3e3e3e"/></svg><svg style="left:2512px;top:349px" width="14" height="14" viewBox="0 0 14 14"><path d="M0 4.5 H14 M0 9.5 H14" stroke="#c4c4c4" stroke-width="1.3"/><rect x="8" y="1" width="2" height="6" fill="#c4c4c4"/><rect x="3.5" y="7" width="2" height="6" fill="#c4c4c4"/></svg><svg style="left:2542px;top:349px" width="4" height="14"><circle cx="2" cy="2" r="1.7" fill="#c4c4c4"/><circle cx="2" cy="7" r="1.7" fill="#c4c4c4"/><circle cx="2" cy="12" r="1.7" fill="#c4c4c4"/></svg><div class="t" style="left:1859px;top:377px;font-size:16px;color:#c4c4c4;">Position</div><div class="t" style="left:2136px;top:377px;font-size:16px;color:#c4c4c4;">X</div><div style="left:2155px;top:375px;width:117px;height:22px;background:#2a2a2a;border-radius:3px;border:1px solid #212121;box-sizing:border-box;"></div><div class="t" style="left:2159px;top:378px;font-size:16px;color:#d2d2d2;">0</div><div class="t" style="left:2277px;top:377px;font-size:16px;color:#c4c4c4;">Y</div><div style="left:2296px;top:375px;width:117px;height:22px;background:#2a2a2a;border-radius:3px;border:1px solid #212121;box-sizing:border-box;"></div><div class="t" style="left:2300px;top:378px;font-size:16px;color:#d2d2d2;">0</div><div class="t" style="left:2419px;top:377px;font-size:16px;color:#c4c4c4;">Z</div><div style="left:2438px;top:375px;width:117px;height:22px;background:#2a2a2a;border-radius:3px;border:1px solid #212121;box-sizing:border-box;"></div><div class="t" style="left:2442px;top:378px;font-size:16px;color:#d2d2d2;">0</div><div class="t" style="left:1859px;top:402px;font-size:16px;color:#c4c4c4;">Rotation</div><div class="t" style="left:2136px;top:402px;font-size:16px;color:#c4c4c4;">X</div><div style="left:2155px;top:400px;width:117px;height:22px;background:#2a2a2a;border-radius:3px;border:1px solid #212121;box-sizing:border-box;"></div><div class="t" style="left:2159px;top:403px;font-size:16px;color:#d2d2d2;">0</div><div class="t" style="left:2277px;top:402px;font-size:16px;color:#c4c4c4;">Y</div><div style="left:2296px;top:400px;width:117px;height:22px;background:#2a2a2a;border-radius:3px;border:1px solid #212121;box-sizing:border-box;"></div><div class="t" style="left:2300px;top:403px;font-size:16px;color:#d2d2d2;">0</div><div class="t" style="left:2419px;top:402px;font-size:16px;color:#c4c4c4;">Z</div><div style="left:2438px;top:400px;width:117px;height:22px;background:#2a2a2a;border-radius:3px;border:1px solid #212121;box-sizing:border-box;"></div><div class="t" style="left:2442px;top:403px;font-size:16px;color:#d2d2d2;">0</div><div class="t" style="left:1859px;top:427px;font-size:16px;color:#c4c4c4;">Scale</div><div class="t" style="left:2136px;top:427px;font-size:16px;color:#c4c4c4;">X</div><div style="left:2155px;top:425px;width:117px;height:22px;background:#2a2a2a;border-radius:3px;border:1px solid #212121;box-sizing:border-box;"></div><div class="t" style="left:2159px;top:428px;font-size:16px;color:#d2d2d2;">1</div><div class="t" style="left:2277px;top:427px;font-size:16px;color:#c4c4c4;">Y</div><div style="left:2296px;top:425px;width:117px;height:22px;background:#2a2a2a;border-radius:3px;border:1px solid #212121;box-sizing:border-box;"></div><div class="t" style="left:2300px;top:428px;font-size:16px;color:#d2d2d2;">1</div><div class="t" style="left:2419px;top:427px;font-size:16px;color:#c4c4c4;">Z</div><div style="left:2438px;top:425px;width:117px;height:22px;background:#2a2a2a;border-radius:3px;border:1px solid #212121;box-sizing:border-box;"></div><div class="t" style="left:2442px;top:428px;font-size:16px;color:#d2d2d2;">1</div><svg style="left:2109px;top:426px" width="17" height="17" viewBox="0 0 17 17"><path d="M5.5 5 H4 a3.5 3.5 0 0 0 0 7 H6 M11.5 5 H13 a3.5 3.5 0 0 1 0 7 H11" fill="none" stroke="#c4c4c4" stroke-width="1.5"/><path d="M3 1.5 L14 15.5" stroke="#c4c4c4" stroke-width="1.4"/></svg><div style="left:1835px;top:460px;width:725px;height:1px;background:#232323;"></div><div style="left:2055px;top:472px;width:285px;height:28px;background:#585858;border-radius:3px;border:1px solid #303030;box-sizing:border-box;"></div><div class="t" style="left:2139px;top:477px;font-size:16px;color:#e0e0e0;">Add Component</div><div style="left:1835px;top:1485px;width:725px;height:1px;background:#232323;"></div><div style="left:1835px;top:1486px;width:725px;height:27px;background:#3e3e3e;"></div><div class="t" style="left:1844px;top:1491px;font-size:15.4px;color:#d2d2d2;font-weight:bold;-webkit-text-stroke:0;">Environment_Narrow_Walls</div><div style="left:2054px;top:1497px;width:484px;height:1px;background:#6a6a6a;"></div><div style="left:2054px;top:1501px;width:484px;height:1px;background:#6a6a6a;"></div><svg style="left:2549px;top:1493px" width="4" height="14"><circle cx="2" cy="2" r="1.7" fill="#c4c4c4"/><circle cx="2" cy="7" r="1.7" fill="#c4c4c4"/><circle cx="2" cy="12" r="1.7" fill="#c4c4c4"/></svg><div style="left:0px;top:930px;width:1833px;height:24px;background:#282828;border-radius:5px 5px 0 0;"></div><div style="left:0px;top:954px;width:1833px;height:559px;background:#383838;"></div><div style="left:0px;top:930px;width:101px;height:24px;background:#3c3c3c;border-radius:5px 5px 0 0;"></div><svg style="left:8.6px;top:937px" width="15" height="12" viewBox="0 0 15 12"><path d="M0 0 H7.6 L9.4 3 H14.6 V12 H0 Z" fill="#c4c4c4"/></svg><div class="t" style="left:28px;top:933px;font-size:16px;color:#c4c4c4;">Project</div><svg style="left:114px;top:936px" width="14" height="13" viewBox="0 0 14 13"><path d="M1 2 C5 2 6 6 9 6.5 M1 11 C5 11 6 7 9 6.5 H13 M10.5 4 L13 6.5 L10.5 9" fill="none" stroke="#c4c4c4" stroke-width="1.5"/></svg><div class="t" style="left:133px;top:933px;font-size:16px;color:#c4c4c4;">Animator</div><svg style="left:228px;top:935px" width="15" height="15" viewBox="0 0 15 15"><circle cx="7.5" cy="7.5" r="7" fill="#c4c4c4"/><path d="M7.5 3 V7.5 H11" fill="none" stroke="#282828" stroke-width="1.6"/></svg><div class="t" style="left:248px;top:933px;font-size:16px;color:#c4c4c4;">Animation</div><svg style="left:353px;top:936px" width="15" height="14" viewBox="0 0 15 14"><rect x="0.7" y="0.7" width="13.6" height="12.6" fill="none" stroke="#c4c4c4" stroke-width="1.4"/><path d="M3.5 1 V13 M11.5 1 V13" stroke="#c4c4c4" stroke-width="1.4"/><path d="M1 4 H3 M1 7 H3 M1 10 H3 M12 4 H14 M12 7 H14 M12 10 H14" stroke="#282828" stroke-width="1"/></svg><div class="t" style="left:373px;top:933px;font-size:16px;color:#c4c4c4;">Timeline</div><svg style="left:469px;top:936px" width="13" height="14" viewBox="0 0 13 14"><rect x="0.7" y="0.7" width="11.6" height="12.6" fill="none" stroke="#c4c4c4" stroke-width="1.4"/><path d="M3 4 H10 M3 7 H10 M3 10 H10" stroke="#c4c4c4" stroke-width="1.3"/></svg><div class="t" style="left:487px;top:933px;font-size:16px;color:#c4c4c4;">Console</div><svg style="left:1790px;top:934px" width="12" height="14" viewBox="0 0 12 14"><rect x="1" y="7" width="10" height="6" fill="none" stroke="#c4c4c4" stroke-width="1.3"/><path d="M3.5 7 V4 a2.5 2.5 0 0 1 5 0 V5" fill="none" stroke="#c4c4c4" stroke-width="1.3"/></svg><svg style="left:1813px;top:934px" width="4" height="14"><circle cx="2" cy="2" r="1.7" fill="#c4c4c4"/><circle cx="2" cy="7" r="1.7" fill="#c4c4c4"/><circle cx="2" cy="12" r="1.7" fill="#c4c4c4"/></svg><div style="left:0px;top:954px;width:1833px;height:25px;background:#3c3c3c;"></div><div style="left:0px;top:979px;width:1833px;height:1px;background:#232323;"></div><svg style="left:8px;top:959px" width="15" height="15"><path d="M7.5 1 V14 M1 7.5 H14" stroke="#c4c4c4" stroke-width="1.8"/></svg><svg style="left:29px;top:964px" width="10" height="6"><polygon points="0,0 10,0 5,6" fill="#c4c4c4"/></svg><div style="left:1252px;top:958px;width:396px;height:19px;background:#2a2a2a;border-radius:4px;border:1px solid #212121;border-top-color:#111;box-sizing:border-box;"></div><svg style="left:1256px;top:961px" width="12" height="12" viewBox="0 0 12 12"><circle cx="4.5" cy="4.5" r="3" fill="none" stroke="#c4c4c4" stroke-width="1.5"/><path d="M6.7 6.7 L10 10" stroke="#c4c4c4" stroke-width="2"/></svg><div style="left:1627px;top:959px;width:20px;height:17px;background:#383838;border-radius:0 3px 3px 0;"></div><svg style="left:1630px;top:960px" width="15" height="15" viewBox="0 0 15 15"><rect x="3.5" y="1.5" width="10" height="10" fill="none" stroke="#c4c4c4" stroke-width="1.2"/><rect x="1" y="9" width="5" height="5" fill="#383838" stroke="#c4c4c4" stroke-width="1.2"/><path d="M6 9 L11 4 M8 4 H11 V7" stroke="#c4c4c4" stroke-width="1.2" fill="none"/></svg><div style="left:1651px;top:954px;width:1px;height:25px;background:#2a2a2a;"></div><div style="left:1685px;top:954px;width:1px;height:25px;background:#2a2a2a;"></div><div style="left:1716px;top:954px;width:1px;height:25px;background:#2a2a2a;"></div><div style="left:1749px;top:954px;width:1px;height:25px;background:#2a2a2a;"></div><div style="left:1781px;top:954px;width:1px;height:25px;background:#2a2a2a;"></div><svg style="left:1659px;top:958px" width="16" height="17" viewBox="0 0 16 17"><rect x="1" y="0" width="6" height="6" fill="#c4c4c4"/><circle cx="4" cy="12" r="4" fill="#c4c4c4"/><polygon points="10,5 15,13 7,13" fill="#c4c4c4"/></svg><svg style="left:1693px;top:959px" width="16" height="16" viewBox="0 0 16 16"><path d="M8 1 H15 V8 L8 15 L1 8 Z" fill="#c4c4c4"/><circle cx="11.5" cy="4.5" r="1.5" fill="#3c3c3c"/></svg><svg style="left:1724px;top:958px" width="17" height="17" viewBox="0 0 17 17"><circle cx="8.5" cy="8.5" r="8" fill="#c4c4c4"/><rect x="7.3" y="3.5" width="2.4" height="7" fill="#3c3c3c"/><circle cx="8.5" cy="13" r="1.3" fill="#3c3c3c"/></svg><svg style="left:1757px;top:959px" width="16" height="16" viewBox="0 0 16 16"><polygon points="8,0.5 10.2,5.6 15.5,5.9 11.4,9.4 12.7,15 8,12 3.3,15 4.6,9.4 0.5,5.9 5.8,5.6" fill="#8a8a8a"/></svg><svg style="left:1786px;top:961px" width="18" height="12" viewBox="0 0 18 12"><path d="M1 6 C5 0 13 0 17 6 C13 12 5 12 1 6 Z" fill="#707070"/><circle cx="9" cy="6" r="2.6" fill="#3c3c3c"/></svg><div class="t" style="left:1806px;top:957px;font-size:16px;color:#b0b0b0;">19</div><div style="left:242px;top:980px;width:17px;height:533px;background:#323232;"></div><div style="left:259px;top:980px;width:1px;height:533px;background:#232323;"></div><svg style="left:245px;top:985px" width="11" height="7"><polygon points="0,7 11,7 5.5,0" fill="#c4c4c4"/></svg><svg style="left:246px;top:1500px" width="10" height="6"><polygon points="0,0 11,0 5.5,7" fill="#c4c4c4"/></svg><div style="left:245px;top:1054px;width:12px;height:313px;background:#5e5e5e;border-radius:6px;"></div><div style="left:0px;top:1220px;width:242px;height:20px;background:#4d4d4d;"></div><div style="left:0;top:980px;width:240px;height:533px;overflow:hidden"><svg style="left:5.0px;top:6px" width="10" height="9"><polygon points="0,0 10,0 5,9" fill="#686868"/></svg><svg style="left:22.4px;top:3px" width="17" height="13" viewBox="0 0 17 13"><path d="M0.7 12.3 V1 H5 L6.5 2.5 H13 V5" fill="none" stroke="#c4c4c4" stroke-width="1.4"/><path d="M0.7 12.3 L3.5 5 H16.5 L13.7 12.3 Z" fill="#c4c4c4"/></svg><div class="t" style="left:44.5px;top:0px;font-size:15.8px;color:#e0e0e0;font-weight:bold;-webkit-text-stroke:0;">Assets</div><svg style="left:40.3px;top:24px" width="14.5" height="12.5" viewBox="0 0 15 13"><path d="M0 1 a1 1 0 0 1 1 -1 H5 L6.5 2 H14 a1 1 0 0 1 1 1 V12 a1 1 0 0 1 -1 1 H1 a1 1 0 0 1 -1 -1 Z" fill="#c4c4c4"/></svg><div class="t" style="left:60.6px;top:20px;font-size:15.8px;color:#d2d2d2;">InputActions</div><svg style="left:22.4px;top:46px" width="10" height="9"><polygon points="0,0 10,0 5,9" fill="#686868"/></svg><svg style="left:39.8px;top:43px" width="17" height="13" viewBox="0 0 17 13"><path d="M0.7 12.3 V1 H5 L6.5 2.5 H13 V5" fill="none" stroke="#c4c4c4" stroke-width="1.4"/><path d="M0.7 12.3 L3.5 5 H16.5 L13.7 12.3 Z" fill="#c4c4c4"/></svg><div class="t" style="left:60.6px;top:40px;font-size:15.8px;color:#d2d2d2;">Samples</div><svg style="left:39.8px;top:66px" width="10" height="9"><polygon points="0,0 10,0 5,9" fill="#686868"/></svg><svg style="left:57.199999999999996px;top:63px" width="17" height="13" viewBox="0 0 17 13"><path d="M0.7 12.3 V1 H5 L6.5 2.5 H13 V5" fill="none" stroke="#c4c4c4" stroke-width="1.4"/><path d="M0.7 12.3 L3.5 5 H16.5 L13.7 12.3 Z" fill="#c4c4c4"/></svg><div class="t" style="left:78.0px;top:60px;font-size:15.8px;color:#d2d2d2;">Cinemachine</div><svg style="left:57.199999999999996px;top:86px" width="10" height="9"><polygon points="0,0 10,0 5,9" fill="#686868"/></svg><svg style="left:74.6px;top:83px" width="17" height="13" viewBox="0 0 17 13"><path d="M0.7 12.3 V1 H5 L6.5 2.5 H13 V5" fill="none" stroke="#c4c4c4" stroke-width="1.4"/><path d="M0.7 12.3 L3.5 5 H16.5 L13.7 12.3 Z" fill="#c4c4c4"/></svg><div class="t" style="left:95.4px;top:80px;font-size:15.8px;color:#d2d2d2;">2.10.5</div><svg style="left:74.6px;top:106px" width="10" height="9"><polygon points="0,0 10,0 5,9" fill="#686868"/></svg><svg style="left:92.0px;top:103px" width="17" height="13" viewBox="0 0 17 13"><path d="M0.7 12.3 V1 H5 L6.5 2.5 H13 V5" fill="none" stroke="#c4c4c4" stroke-width="1.4"/><path d="M0.7 12.3 L3.5 5 H16.5 L13.7 12.3 Z" fill="#c4c4c4"/></svg><div class="t" style="left:112.8px;top:100px;font-size:15.8px;color:#d2d2d2;">Cinemachine Examp</div><svg style="left:93.0px;top:125px" width="9" height="10"><polygon points="0,0 9,5 0,10" fill="#686868"/></svg><svg style="left:109.9px;top:124px" width="14.5" height="12.5" viewBox="0 0 15 13"><path d="M0 1 a1 1 0 0 1 1 -1 H5 L6.5 2 H14 a1 1 0 0 1 1 1 V12 a1 1 0 0 1 -1 1 H1 a1 1 0 0 1 -1 -1 Z" fill="#c4c4c4"/></svg><div class="t" style="left:130.2px;top:120px;font-size:15.8px;color:#d2d2d2;">Scenes</div><svg style="left:92.0px;top:146px" width="10" height="9"><polygon points="0,0 10,0 5,9" fill="#686868"/></svg><svg style="left:109.4px;top:143px" width="17" height="13" viewBox="0 0 17 13"><path d="M0.7 12.3 V1 H5 L6.5 2.5 H13 V5" fill="none" stroke="#c4c4c4" stroke-width="1.4"/><path d="M0.7 12.3 L3.5 5 H16.5 L13.7 12.3 Z" fill="#c4c4c4"/></svg><div class="t" style="left:130.2px;top:140px;font-size:15.8px;color:#d2d2d2;">Shared</div><svg style="left:127.29999999999998px;top:164px" width="14.5" height="12.5" viewBox="0 0 15 13"><path d="M0 1 a1 1 0 0 1 1 -1 H5 L6.5 2 H14 a1 1 0 0 1 1 1 V12 a1 1 0 0 1 -1 1 H1 a1 1 0 0 1 -1 -1 Z" fill="#c4c4c4"/></svg><div class="t" style="left:147.6px;top:160px;font-size:15.8px;color:#d2d2d2;">Animation</div><svg style="left:127.29999999999998px;top:184px" width="14.5" height="12.5" viewBox="0 0 15 13"><path d="M0 1 a1 1 0 0 1 1 -1 H5 L6.5 2 H14 a1 1 0 0 1 1 1 V12 a1 1 0 0 1 -1 1 H1 a1 1 0 0 1 -1 -1 Z" fill="#c4c4c4"/></svg><div class="t" style="left:147.6px;top:180px;font-size:15.8px;color:#d2d2d2;">Blends</div><svg style="left:127.29999999999998px;top:204px" width="14.5" height="12.5" viewBox="0 0 15 13"><path d="M0 1 a1 1 0 0 1 1 -1 H5 L6.5 2 H14 a1 1 0 0 1 1 1 V12 a1 1 0 0 1 -1 1 H1 a1 1 0 0 1 -1 -1 Z" fill="#c4c4c4"/></svg><div class="t" style="left:147.6px;top:200px;font-size:15.8px;color:#d2d2d2;">Materials</div><svg style="left:110.39999999999999px;top:225px" width="9" height="10"><polygon points="0,0 9,5 0,10" fill="#686868"/></svg><svg style="left:127.29999999999998px;top:224px" width="14.5" height="12.5" viewBox="0 0 15 13"><path d="M0 1 a1 1 0 0 1 1 -1 H5 L6.5 2 H14 a1 1 0 0 1 1 1 V12 a1 1 0 0 1 -1 1 H1 a1 1 0 0 1 -1 -1 Z" fill="#c4c4c4"/></svg><div class="t" style="left:147.6px;top:220px;font-size:15.8px;color:#d2d2d2;">Models</div><div style="left:108px;top:241px;width:110px;height:21px;box-sizing:border-box;border:2px solid #c9c25a;border-radius:7px;background:linear-gradient(#1b1b1b,#3a3a3a);box-shadow:0 0 3px #b8b050"></div><svg style="left:127.29999999999998px;top:244px" width="14.5" height="12.5" viewBox="0 0 15 13"><path d="M0 1 a1 1 0 0 1 1 -1 H5 L6.5 2 H14 a1 1 0 0 1 1 1 V12 a1 1 0 0 1 -1 1 H1 a1 1 0 0 1 -1 -1 Z" fill="#c4c4c4"/></svg><div class="t" style="left:147.6px;top:240px;font-size:15.8px;color:#d2d2d2;">Prefabs</div><svg style="left:127.29999999999998px;top:264px" width="14.5" height="12.5" viewBox="0 0 15 13"><path d="M0 1 a1 1 0 0 1 1 -1 H5 L6.5 2 H14 a1 1 0 0 1 1 1 V12 a1 1 0 0 1 -1 1 H1 a1 1 0 0 1 -1 -1 Z" fill="#c4c4c4"/></svg><div class="t" style="left:147.6px;top:260px;font-size:15.8px;color:#d2d2d2;">Scripts</div><svg style="left:127.29999999999998px;top:284px" width="14.5" height="12.5" viewBox="0 0 15 13"><path d="M0 1 a1 1 0 0 1 1 -1 H5 L6.5 2 H14 a1 1 0 0 1 1 1 V12 a1 1 0 0 1 -1 1 H1 a1 1 0 0 1 -1 -1 Z" fill="#c4c4c4"/></svg><div class="t" style="left:147.6px;top:280px;font-size:15.8px;color:#d2d2d2;">Textures</div><svg style="left:40.3px;top:304px" width="14.5" height="12.5" viewBox="0 0 15 13"><path d="M0 1 a1 1 0 0 1 1 -1 H5 L6.5 2 H14 a1 1 0 0 1 1 1 V12 a1 1 0 0 1 -1 1 H1 a1 1 0 0 1 -1 -1 Z" fill="#c4c4c4"/></svg><div class="t" style="left:60.6px;top:300px;font-size:15.8px;color:#d2d2d2;">Scenes</div><svg style="left:40.3px;top:324px" width="14.5" height="12.5" viewBox="0 0 15 13"><path d="M0 1 a1 1 0 0 1 1 -1 H5 L6.5 2 H14 a1 1 0 0 1 1 1 V12 a1 1 0 0 1 -1 1 H1 a1 1 0 0 1 -1 -1 Z" fill="#c4c4c4"/></svg><div class="t" style="left:60.6px;top:320px;font-size:15.8px;color:#d2d2d2;">Scripts</div><svg style="left:40.3px;top:344px" width="14.5" height="12.5" viewBox="0 0 15 13"><path d="M0 1 a1 1 0 0 1 1 -1 H5 L6.5 2 H14 a1 1 0 0 1 1 1 V12 a1 1 0 0 1 -1 1 H1 a1 1 0 0 1 -1 -1 Z" fill="#c4c4c4"/></svg><div class="t" style="left:60.6px;top:340px;font-size:15.8px;color:#d2d2d2;">Settings</div><svg style="left:5.0px;top:366px" width="10" height="9"><polygon points="0,0 10,0 5,9" fill="#686868"/></svg><svg style="left:22.4px;top:363px" width="17" height="13" viewBox="0 0 17 13"><path d="M0.7 12.3 V1 H5 L6.5 2.5 H13 V5" fill="none" stroke="#c4c4c4" stroke-width="1.4"/><path d="M0.7 12.3 L3.5 5 H16.5 L13.7 12.3 Z" fill="#c4c4c4"/></svg><div class="t" style="left:44.5px;top:360px;font-size:15.8px;color:#e0e0e0;font-weight:bold;-webkit-text-stroke:0;">Packages</div><svg style="left:23.4px;top:385px" width="9" height="10"><polygon points="0,0 9,5 0,10" fill="#686868"/></svg><svg style="left:40.3px;top:384px" width="14.5" height="12.5" viewBox="0 0 15 13"><path d="M0 1 a1 1 0 0 1 1 -1 H5 L6.5 2 H14 a1 1 0 0 1 1 1 V12 a1 1 0 0 1 -1 1 H1 a1 1 0 0 1 -1 -1 Z" fill="#c4c4c4"/></svg><div class="t" style="left:60.6px;top:380px;font-size:15.8px;color:#d2d2d2;">Burst</div><svg style="left:23.4px;top:405px" width="9" height="10"><polygon points="0,0 9,5 0,10" fill="#686868"/></svg><svg style="left:40.3px;top:404px" width="14.5" height="12.5" viewBox="0 0 15 13"><path d="M0 1 a1 1 0 0 1 1 -1 H5 L6.5 2 H14 a1 1 0 0 1 1 1 V12 a1 1 0 0 1 -1 1 H1 a1 1 0 0 1 -1 -1 Z" fill="#c4c4c4"/></svg><div class="t" style="left:60.6px;top:400px;font-size:15.8px;color:#d2d2d2;">Cinemachine</div><svg style="left:23.4px;top:425px" width="9" height="10"><polygon points="0,0 9,5 0,10" fill="#686868"/></svg><svg style="left:40.3px;top:424px" width="14.5" height="12.5" viewBox="0 0 15 13"><path d="M0 1 a1 1 0 0 1 1 -1 H5 L6.5 2 H14 a1 1 0 0 1 1 1 V12 a1 1 0 0 1 -1 1 H1 a1 1 0 0 1 -1 -1 Z" fill="#c4c4c4"/></svg><div class="t" style="left:60.6px;top:420px;font-size:15.8px;color:#d2d2d2;">Core RP Library</div><svg style="left:23.4px;top:445px" width="9" height="10"><polygon points="0,0 9,5 0,10" fill="#686868"/></svg><svg style="left:40.3px;top:444px" width="14.5" height="12.5" viewBox="0 0 15 13"><path d="M0 1 a1 1 0 0 1 1 -1 H5 L6.5 2 H14 a1 1 0 0 1 1 1 V12 a1 1 0 0 1 -1 1 H1 a1 1 0 0 1 -1 -1 Z" fill="#c4c4c4"/></svg><div class="t" style="left:60.6px;top:440px;font-size:15.8px;color:#d2d2d2;">Custom NUnit</div><svg style="left:23.4px;top:465px" width="9" height="10"><polygon points="0,0 9,5 0,10" fill="#686868"/></svg><svg style="left:40.3px;top:464px" width="14.5" height="12.5" viewBox="0 0 15 13"><path d="M0 1 a1 1 0 0 1 1 -1 H5 L6.5 2 H14 a1 1 0 0 1 1 1 V12 a1 1 0 0 1 -1 1 H1 a1 1 0 0 1 -1 -1 Z" fill="#c4c4c4"/></svg><div class="t" style="left:60.6px;top:460px;font-size:15.8px;color:#d2d2d2;">Input System</div><svg style="left:23.4px;top:485px" width="9" height="10"><polygon points="0,0 9,5 0,10" fill="#686868"/></svg><svg style="left:40.3px;top:484px" width="14.5" height="12.5" viewBox="0 0 15 13"><path d="M0 1 a1 1 0 0 1 1 -1 H5 L6.5 2 H14 a1 1 0 0 1 1 1 V12 a1 1 0 0 1 -1 1 H1 a1 1 0 0 1 -1 -1 Z" fill="#c4c4c4"/></svg><div class="t" style="left:60.6px;top:480px;font-size:15.8px;color:#d2d2d2;">JetBrains Rider Editor</div><svg style="left:23.4px;top:505px" width="9" height="10"><polygon points="0,0 9,5 0,10" fill="#686868"/></svg><svg style="left:40.3px;top:504px" width="14.5" height="12.5" viewBox="0 0 15 13"><path d="M0 1 a1 1 0 0 1 1 -1 H5 L6.5 2 H14 a1 1 0 0 1 1 1 V12 a1 1 0 0 1 -1 1 H1 a1 1 0 0 1 -1 -1 Z" fill="#c4c4c4"/></svg><div class="t" style="left:60.6px;top:500px;font-size:15.8px;color:#d2d2d2;">Mathematics</div><svg style="left:23.4px;top:525px" width="9" height="10"><polygon points="0,0 9,5 0,10" fill="#686868"/></svg><svg style="left:40.3px;top:524px" width="14.5" height="12.5" viewBox="0 0 15 13"><path d="M0 1 a1 1 0 0 1 1 -1 H5 L6.5 2 H14 a1 1 0 0 1 1 1 V12 a1 1 0 0 1 -1 1 H1 a1 1 0 0 1 -1 -1 Z" fill="#c4c4c4"/></svg><div class="t" style="left:60.6px;top:520px;font-size:15.8px;color:#d2d2d2;">Searcher</div></div><div style="left:260px;top:980px;width:1573px;height:508px;background:#333333;"></div><div style="left:260px;top:980px;width:1573px;height:26px;background:#3e3e3e;"></div><div class="t" style="left:265.4px;top:983px;font-size:16px;color:#c4c4c4;">Assets</div><div class="t" style="left:335.5px;top:983px;font-size:16px;color:#c4c4c4;">Samples</div><div class="t" style="left:420px;top:983px;font-size:16px;color:#c4c4c4;">Cinemachine</div><div class="t" style="left:537.6px;top:983px;font-size:16px;color:#c4c4c4;">2.10.5</div><div class="t" style="left:604.2px;top:983px;font-size:16px;color:#c4c4c4;">Cinemachine Example Scenes</div><div class="t" style="left:844px;top:983px;font-size:16px;color:#c4c4c4;">Shared</div><svg style="left:322px;top:986px" width="8" height="13"><path d="M1.5 1.5 L6 6.5 L1.5 11.5" fill="none" stroke="#9a9a9a" stroke-width="1.4"/></svg><svg style="left:406.5px;top:986px" width="8" height="13"><path d="M1.5 1.5 L6 6.5 L1.5 11.5" fill="none" stroke="#9a9a9a" stroke-width="1.4"/></svg><svg style="left:523.7px;top:986px" width="8" height="13"><path d="M1.5 1.5 L6 6.5 L1.5 11.5" fill="none" stroke="#9a9a9a" stroke-width="1.4"/></svg><svg style="left:590.9px;top:986px" width="8" height="13"><path d="M1.5 1.5 L6 6.5 L1.5 11.5" fill="none" stroke="#9a9a9a" stroke-width="1.4"/></svg><svg style="left:830.6px;top:986px" width="8" height="13"><path d="M1.5 1.5 L6 6.5 L1.5 11.5" fill="none" stroke="#9a9a9a" stroke-width="1.4"/></svg><svg style="left:904px;top:986px" width="8" height="13"><path d="M1.5 1.5 L6 6.5 L1.5 11.5" fill="none" stroke="#9a9a9a" stroke-width="1.4"/></svg><div class="t" style="left:918px;top:983px;font-size:16px;color:#e0e0e0;font-weight:bold;-webkit-text-stroke:0;">Prefabs</div><div style="left:260px;top:1128px;width:1573px;height:20px;background:#4d4d4d;"></div><svg style="left:282px;top:1012px" width="14.5" height="12.5" viewBox="0 0 15 13"><path d="M0 1 a1 1 0 0 1 1 -1 H5 L6.5 2 H14 a1 1 0 0 1 1 1 V12 a1 1 0 0 1 -1 1 H1 a1 1 0 0 1 -1 -1 Z" fill="#c4c4c4"/></svg><div class="t" style="left:302px;top:1008px;font-size:15.6px;color:#d2d2d2;">FBX</div><svg style="left:281px;top:1029px" width="17" height="18.0" viewBox="0 0 17 18"><polygon points="8.5,0.3 16.7,4.7 16.7,13.3 8.5,17.7 0.3,13.3 0.3,4.7" fill="#7fd3fb"/><path d="M0.6 4.9 L8.5 9.1 L16.4 4.9 M8.5 9.1 V17.6" fill="none" stroke="#333333" stroke-width="1.1"/></svg><div class="t" style="left:302px;top:1028px;font-size:15.6px;color:#d2d2d2;">Corridors_1_2</div><svg style="left:281px;top:1049px" width="17" height="18.0" viewBox="0 0 17 18"><polygon points="8.5,0.3 16.7,4.7 16.7,13.3 8.5,17.7 0.3,13.3 0.3,4.7" fill="#7fd3fb"/><path d="M0.6 4.9 L8.5 9.1 L16.4 4.9 M8.5 9.1 V17.6" fill="none" stroke="#333333" stroke-width="1.1"/></svg><div class="t" style="left:302px;top:1048px;font-size:15.6px;color:#d2d2d2;">Environment_2D</div><svg style="left:281px;top:1069px" width="17" height="18.0" viewBox="0 0 17 18"><polygon points="8.5,0.3 16.7,4.7 16.7,13.3 8.5,17.7 0.3,13.3 0.3,4.7" fill="#7fd3fb"/><path d="M0.6 4.9 L8.5 9.1 L16.4 4.9 M8.5 9.1 V17.6" fill="none" stroke="#333333" stroke-width="1.1"/></svg><div class="t" style="left:302px;top:1068px;font-size:15.6px;color:#d2d2d2;">Environment_Clear_BluePedestal</div><svg style="left:281px;top:1089px" width="17" height="18.0" viewBox="0 0 17 18"><polygon points="8.5,0.3 16.7,4.7 16.7,13.3 8.5,17.7 0.3,13.3 0.3,4.7" fill="#7fd3fb"/><path d="M0.6 4.9 L8.5 9.1 L16.4 4.9 M8.5 9.1 V17.6" fill="none" stroke="#333333" stroke-width="1.1"/></svg><div class="t" style="left:302px;top:1088px;font-size:15.6px;color:#d2d2d2;">Environment_Corridor</div><svg style="left:281px;top:1109px" width="17" height="18.0" viewBox="0 0 17 18"><polygon points="8.5,0.3 16.7,4.7 16.7,13.3 8.5,17.7 0.3,13.3 0.3,4.7" fill="#7fd3fb"/><path d="M0.6 4.9 L8.5 9.1 L16.4 4.9 M8.5 9.1 V17.6" fill="none" stroke="#333333" stroke-width="1.1"/></svg><div class="t" style="left:302px;top:1108px;font-size:15.6px;color:#d2d2d2;">Environment_CorridorMixingCam</div><div style="left:269px;top:1127px;width:228px;height:23px;box-sizing:border-box;border:2px solid #c9c25a;border-radius:7px;background:linear-gradient(#1b1b1b,#3a3a3a);box-shadow:0 0 3px #b8b050"></div><svg style="left:280px;top:1129px" width="17" height="18.0" viewBox="0 0 17 18"><polygon points="8.5,0.3 16.7,4.7 16.7,13.3 8.5,17.7 0.3,13.3 0.3,4.7" fill="#7fd3fb"/><path d="M0.6 4.9 L8.5 9.1 L16.4 4.9 M8.5 9.1 V17.6" fill="none" stroke="#333333" stroke-width="1.1"/></svg><div class="t" style="left:301px;top:1128px;font-size:15.6px;color:#d2d2d2;">Environment_Narrow_Walls</div><svg style="left:281px;top:1149px" width="17" height="18.0" viewBox="0 0 17 18"><polygon points="8.5,0.3 16.7,4.7 16.7,13.3 8.5,17.7 0.3,13.3 0.3,4.7" fill="#7fd3fb"/><path d="M0.6 4.9 L8.5 9.1 L16.4 4.9 M8.5 9.1 V17.6" fill="none" stroke="#333333" stroke-width="1.1"/></svg><div class="t" style="left:302px;top:1148px;font-size:15.6px;color:#d2d2d2;">Stage1</div><svg style="left:281px;top:1169px" width="17" height="18.0" viewBox="0 0 17 18"><polygon points="8.5,0.3 16.7,4.7 16.7,13.3 8.5,17.7 0.3,13.3 0.3,4.7" fill="#7fd3fb"/><path d="M0.6 4.9 L8.5 9.1 L16.4 4.9 M8.5 9.1 V17.6" fill="none" stroke="#333333" stroke-width="1.1"/></svg><div class="t" style="left:302px;top:1168px;font-size:15.6px;color:#d2d2d2;">Stage2</div><div style="left:260px;top:1488px;width:1573px;height:25px;background:#414141;"></div><svg style="left:265px;top:1492px" width="17" height="18.0" viewBox="0 0 17 18"><polygon points="8.5,0.3 16.7,4.7 16.7,13.3 8.5,17.7 0.3,13.3 0.3,4.7" fill="#7fd3fb"/><path d="M0.6 4.9 L8.5 9.1 L16.4 4.9 M8.5 9.1 V17.6" fill="none" stroke="#414141" stroke-width="1.1"/></svg><div class="t" style="left:285.5px;top:1491px;font-size:16px;color:#d2d2d2;">Assets/Samples/Cinemachine/2.10.5/Cinemachine Example Scenes/Shared/Prefabs/Environment_Narrow_Walls.prefab</div><div style="left:1752px;top:1499px;width:61px;height:3px;background:#5e5e5e;border-radius:2px;"></div><svg style="left:1743px;top:1493px" width="14" height="14"><circle cx="7" cy="7" r="6.3" fill="#999"/></svg><svg style="left:2433px;top:1517px" width="20" height="20" viewBox="0 0 20 20"><ellipse cx="10" cy="11" rx="5" ry="6" fill="#c4c4c4"/><path d="M6 3 L8 6 M14 3 L12 6 M2 10 H5 M15 10 H18 M2.5 16 L5 14 M17.5 16 L15 14" stroke="#c4c4c4" stroke-width="1.4"/><path d="M3 2 L18 18" stroke="#191919" stroke-width="3"/><path d="M3 2 L18 18" stroke="#c4c4c4" stroke-width="1.3"/></svg><svg style="left:2466px;top:1517px" width="20" height="20" viewBox="0 0 20 20"><ellipse cx="10" cy="5" rx="7" ry="3" fill="#c4c4c4"/><path d="M3 8 C3 11 17 11 17 8 V11 C17 14 3 14 3 11 Z M3 13 C3 16 17 16 17 13 V16 C17 19 3 19 3 16 Z" fill="#c4c4c4"/><path d="M4 2 L17 19" stroke="#191919" stroke-width="3"/><path d="M4 2 L17 19" stroke="#c4c4c4" stroke-width="1.3"/></svg><svg style="left:2500px;top:1517px" width="20" height="20" viewBox="0 0 20 20"><circle cx="10" cy="10" r="7" fill="none" stroke="#c4c4c4" stroke-width="1.6" stroke-dasharray="8 3"/><circle cx="10" cy="10" r="2.5" fill="#c4c4c4"/><path d="M3 3 L17 17" stroke="#c4c4c4" stroke-width="1.4"/></svg><svg style="left:2533px;top:1517px" width="20" height="20" viewBox="0 0 20 20"><circle cx="10" cy="10" r="7.5" fill="none" stroke="#c4c4c4" stroke-width="1.5"/><path d="M6 10 L9 13 L14 7" fill="none" stroke="#c4c4c4" stroke-width="1.6"/></svg><div style="left:2429px;top:1516px;width:1px;height:24px;background:#2a2a2a;"></div><div style="left:2463px;top:1516px;width:1px;height:24px;background:#2a2a2a;"></div><div style="left:2496px;top:1516px;width:1px;height:24px;background:#2a2a2a;"></div><div style="left:2529px;top:1516px;width:1px;height:24px;background:#2a2a2a;"></div></body></html>
